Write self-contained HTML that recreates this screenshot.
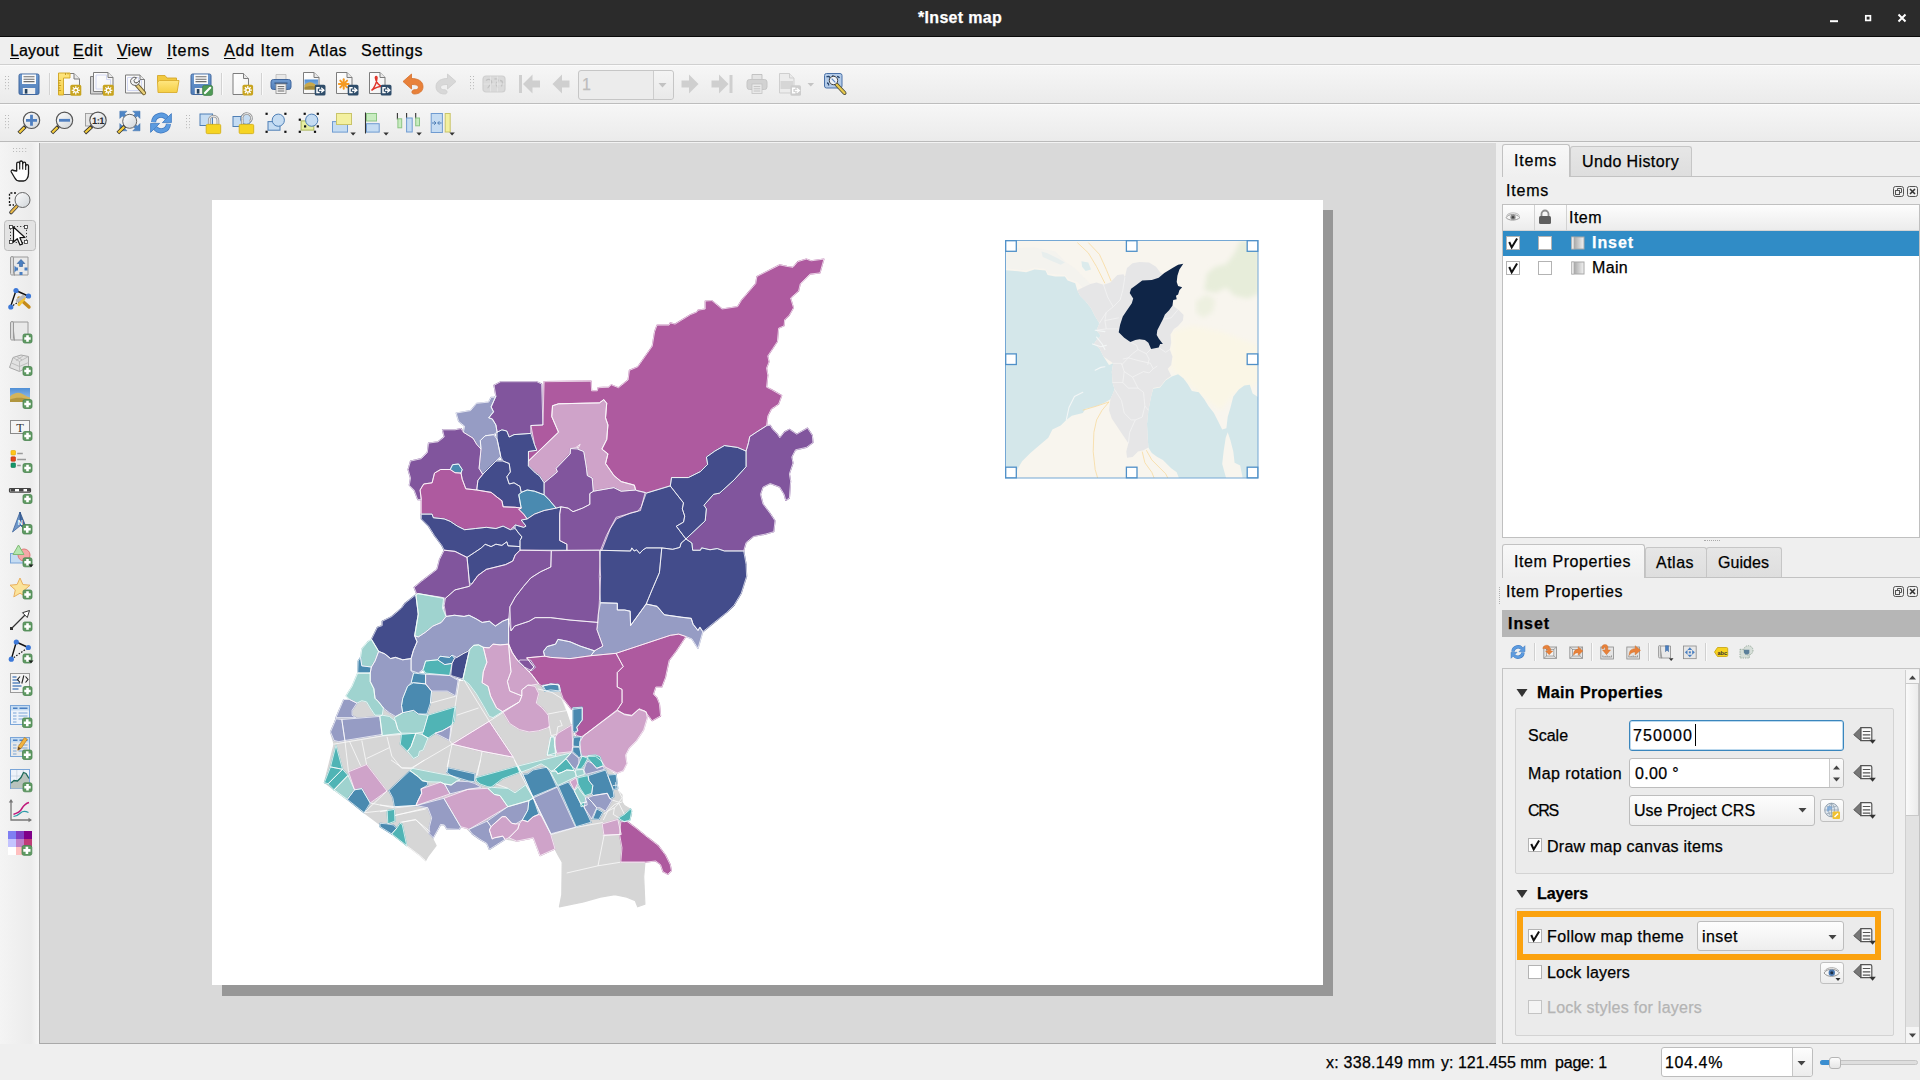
<!DOCTYPE html>
<html><head><meta charset="utf-8"><title>*Inset map</title>
<style>

html,body{margin:0;padding:0}
body{width:1920px;height:1080px;overflow:hidden;background:#efefef;font-family:"Liberation Sans",sans-serif;position:relative}
.t{position:absolute;white-space:nowrap;line-height:20px;font-family:"Liberation Sans",sans-serif;-webkit-text-stroke:0.25px currentColor}
.t u{text-decoration:underline;text-underline-offset:2px;text-decoration-thickness:1px}
.a{position:absolute;box-sizing:border-box}
.ic{position:absolute;overflow:visible}

</style></head>
<body>
<div class="a" style="left:0px;top:0px;width:1920px;height:36px;background:#2b2b2b"></div>
<div class="a" style="left:0px;top:36px;width:1920px;height:1px;background:#0a0a0a"></div>
<span class="t" style="left:918.0px;top:8.1px;font-size:16px;letter-spacing:0.31px;color:#fff;font-weight:700;">*Inset map</span>
<svg class="ic" style="left:1820px;top:8px" width="100" height="22" viewBox="0 0 100 22"><rect x="10" y="12.2" width="8" height="2" fill="#fff"/><rect x="45.8" y="7.8" width="4.6" height="4.6" fill="none" stroke="#fff" stroke-width="1.7"/><path d="M78.5 6.5l7 7M85.5 6.5l-7 7" stroke="#fff" stroke-width="2" fill="none"/></svg>
<div class="a" style="left:0px;top:37px;width:1920px;height:27px;background:#efefef"></div>
<div class="a" style="left:0px;top:64px;width:1920px;height:1px;background:#d0d0d0"></div>
<div class="a" style="left:0px;top:65px;width:1920px;height:1px;background:#fbfbfb"></div>
<span class="t" style="left:10.0px;top:40.8px;font-size:16px;letter-spacing:0.16px;color:#000;"><u>L</u>ayout</span>
<span class="t" style="left:73.0px;top:40.8px;font-size:16px;letter-spacing:0.61px;color:#000;"><u>E</u>dit</span>
<span class="t" style="left:117.0px;top:40.8px;font-size:16px;letter-spacing:0.15px;color:#000;"><u>V</u>iew</span>
<span class="t" style="left:167.0px;top:40.8px;font-size:16px;letter-spacing:0.78px;color:#000;"><u>I</u>tems</span>
<span class="t" style="left:224.0px;top:40.8px;font-size:16px;letter-spacing:0.87px;color:#000;"><u>A</u>dd Item</span>
<span class="t" style="left:309.0px;top:40.8px;font-size:16px;letter-spacing:0.49px;color:#000;">Atlas</span>
<span class="t" style="left:361.0px;top:40.8px;font-size:16px;letter-spacing:0.52px;color:#000;">Settings</span>
<div class="a" style="left:0px;top:66px;width:1920px;height:37px;background:linear-gradient(#f6f6f6,#ebebeb)"></div>
<div class="a" style="left:0px;top:103px;width:1920px;height:1px;background:#bdbdbd"></div>
<div class="a" style="left:0px;top:104px;width:1920px;height:1px;background:#fbfbfb"></div>
<div class="a" style="left:0px;top:105px;width:1920px;height:36px;background:linear-gradient(#f6f6f6,#ebebeb)"></div>
<div class="a" style="left:0px;top:141px;width:1920px;height:1px;background:#bababa"></div>
<div class="a" style="left:0px;top:142px;width:1920px;height:1px;background:#f3f3f3"></div>
<div class="a" style="left:578px;top:70px;width:96px;height:30px;background:#ececec;border:1px solid #c6c6c6;border-radius:3px"></div>
<div class="a" style="left:653px;top:71px;width:20px;height:28px;background:linear-gradient(#f4f4f4,#e9e9e9);border-left:1px solid #cdcdcd;border-radius:0 3px 3px 0"></div>
<svg class="ic" style="left:658px;top:82px" width="9" height="6" viewBox="0 0 9 6"><path d="M0.5 1h8L4.500 5.500z" fill="#c2c2c2"/></svg>
<span class="t" style="left:582.0px;top:75.3px;font-size:16px;letter-spacing:0.00px;color:#bdbdbd;">1</span>
<div class="a" style="left:0px;top:143px;width:39px;height:901px;background:linear-gradient(90deg,#f4f4f4,#ececec 80%,#f6f6f6)"></div>
<div class="a" style="left:39px;top:143px;width:1px;height:901px;background:#a8a8a8"></div>
<div class="a" style="left:40px;top:143px;width:1456px;height:901px;background:#d9d9d9;border-bottom:1px solid #a9a9a9"></div>
<div class="a" style="left:222px;top:210px;width:1111px;height:786px;background:#979797"></div>
<div class="a" style="left:212px;top:200px;width:1111px;height:785px;background:#fff"></div>
<svg class="ic" style="left:0;top:0" width="1920" height="1080" viewBox="0 0 1920 1080"><g stroke-width="1.2" stroke-linejoin="round">
<polygon fill="#d6d6d6" stroke="#d6d6d6" points="334.1,723.6 330.5,732.0 334.1,744.1 330.5,758.5 324.4,782.6 347.3,799.4 364.2,812.7 378.6,823.5 391.7,833.9 406.7,845.6 420.0,855.6 425.6,860.6 427.8,856.7 436.1,845.6 432.2,837.8 428.9,833.3 429.4,826.7 431.7,825.6 433.3,837.8 438.9,827.8 440.6,824.4 444.4,825.0 446.7,828.9 459.4,829.4 460.6,826.7 466.7,828.3 472.2,833.9 480.0,839.4 486.7,843.3 489.4,849.4 502.2,840.6 505.0,837.8 507.8,839.4 516.7,841.1 533.3,837.8 540.0,855.6 555.0,848.9 557.8,854.4 562.2,862.2 561.8,894.7 559.4,906.8 583.5,901.9 600.4,897.1 614.8,894.7 626.8,897.1 635.3,900.7 637.7,906.8 644.9,904.3 643.7,876.7 644.9,862.2 624.4,862.2 622.0,847.8 619.6,834.5 620.8,821.8 629.3,820.1 631.7,814.1 630.5,809.3 624.4,805.6 622.0,802.0 622.0,794.8 617.2,790.0 616.0,775.6 605.2,767.1 581.1,756.3 559.4,691.3 528.1,672.0 502.6,681.5 454.4,681.5 411.1,691.1 370.2,698.3 348.5,698.8 338.9,710.4"/>
<polygon fill="#ae5a9f" stroke="#ae5a9f" points="823.9,259.1 820.0,272.9 809.9,274.1 800.3,283.7 798.6,290.9 790.6,298.1 793.5,307.8 789.4,315.0 784.6,319.8 784.1,325.8 778.6,328.2 777.4,341.5 772.6,348.7 767.8,355.9 769.0,361.9 766.6,368.0 767.8,375.2 766.6,387.2 771.4,389.6 781.7,395.6 778.6,404.1 771.4,408.9 767.8,416.1 766.6,425.7 756.9,431.8 749.7,436.6 748.5,442.6 746.1,451.0 737.7,447.4 724.4,445.5 714.8,451.0 706.4,457.0 707.6,464.3 700.4,471.5 688.3,477.5 671.5,477.5 670.3,485.7 646.7,492.9 637.8,491.0 635.6,490.0 634.4,485.2 621.2,481.6 613.9,475.6 605.5,463.5 607.9,453.9 601.9,449.1 606.7,439.5 607.9,425.0 605.5,417.8 606.7,403.3 603.8,399.7 599.5,402.9 558.6,403.8 552.6,405.8 551.8,416.6 558.6,432.2 528.5,461.1 528.5,451.5 536.9,450.3 534.5,444.3 530.9,425.5 542.9,425.0 544.1,381.7 591.1,381.2 591.6,390.8 597.3,390.8 598.1,387.7 608.9,387.2 611.3,384.8 618.5,387.7 628.1,380.0 629.4,370.4 637.8,366.8 652.2,346.3 654.6,331.8 657.0,325.1 669.1,325.1 670.3,322.9 675.1,324.1 690.7,314.5 696.8,312.1 698.0,310.2 705.2,309.0 705.2,301.0 711.9,300.6 722.0,309.0 737.7,306.6 741.3,300.6 755.7,283.7 756.9,276.5 779.8,264.9 787.0,266.4 793.0,267.3 797.9,261.6 806.3,259.1 811.1,260.8"/>
<polygon fill="#81559d" stroke="#81559d" points="746.1,451.0 748.5,442.6 749.7,436.6 756.9,431.8 766.6,425.7 770.2,425.3 772.6,429.3 777.4,434.2 779.8,437.8 784.6,431.8 789.4,429.3 796.7,434.2 807.5,428.1 812.3,435.4 813.0,442.6 806.3,447.4 795.5,449.8 791.8,457.0 793.0,463.0 789.4,473.9 790.6,481.1 789.4,498.0 785.8,500.4 784.1,494.3 779.8,487.1 770.2,483.5 763.0,487.1 760.5,494.3 763.0,504.0 770.2,513.6 775.0,520.8 773.8,531.7 765.4,534.1 753.3,536.5 746.1,542.5 743.7,550.9 724.4,550.9 717.2,548.5 710.0,549.7 701.6,547.8 700.4,550.2 692.7,550.2 691.9,543.0 685.9,538.9 705.2,520.8 706.4,508.8 704.0,505.2 713.6,494.3 719.6,493.1 734.1,479.9 746.1,466.7"/>
<polygon fill="#434c8b" stroke="#434c8b" points="685.9,539.0 691.9,543.1 692.7,550.3 700.4,550.3 701.6,547.9 710.0,549.8 717.2,548.6 724.4,551.0 743.7,551.0 746.1,564.3 746.6,576.3 741.3,593.1 734.1,605.2 726.8,612.4 714.8,622.0 702.8,631.7 699.9,627.3 698.0,630.5 693.1,624.4 691.2,618.4 681.1,617.2 664.3,614.8 657.0,606.4 646.2,604.0 652.2,589.5 659.4,572.7 661.8,547.9 672.7,549.3 679.9,547.4 681.1,543.1"/>
<polygon fill="#434c8b" stroke="#434c8b" points="600.5,550.3 630.6,551.0 631.8,547.9 634.2,551.0 636.6,549.8 639.7,553.4 643.1,549.8 646.2,547.9 661.8,547.9 659.4,572.7 652.2,589.5 646.2,604.0 630.6,625.6 630.1,611.2 624.5,610.0 617.3,610.0 617.3,603.3 600.5,602.8 599.3,576.3"/>
<polygon fill="#434c8b" stroke="#434c8b" points="646.2,493.2 670.3,486.0 683.5,502.9 682.3,508.9 684.7,516.1 683.5,522.1 676.3,526.2 685.9,539.0 681.1,543.1 679.9,547.4 672.7,549.3 661.8,547.9 646.2,547.9 643.1,549.8 639.7,553.4 636.6,549.8 634.2,551.0 631.8,547.9 630.6,551.0 600.5,550.3 606.5,535.4 616.1,517.3 637.8,511.3 641.4,506.5"/>
<polygon fill="#434c8b" stroke="#434c8b" points="670.3,486.0 671.5,477.6 688.3,477.6 700.4,471.6 707.6,464.4 706.4,457.1 714.8,451.1 724.4,445.6 737.7,447.5 746.1,451.1 746.1,466.8 734.1,480.0 719.6,493.2 713.6,494.4 704.0,505.3 706.4,508.9 705.2,520.9 685.9,539.0 676.3,526.2 683.5,522.1 684.7,516.1 682.3,508.9 683.5,502.9"/>
<polygon fill="#969cc4" stroke="#969cc4" points="600.5,602.8 617.3,603.3 617.3,610.0 624.5,610.0 630.1,611.2 630.6,625.6 646.2,604.0 657.0,606.4 664.3,614.8 681.1,617.2 691.2,618.4 693.1,624.4 698.0,630.5 699.9,627.3 702.8,631.7 700.4,640.1 698.0,648.5 691.9,638.9 685.9,636.5 678.7,634.1 670.3,635.3 616.1,653.3 590.8,655.7 594.4,650.9 602.9,646.1 596.9,629.3 598.1,614.8"/>
<polygon fill="#ae5a9f" stroke="#ae5a9f" points="616.1,653.3 670.3,635.3 678.7,634.1 685.9,636.5 676.3,650.9 669.1,660.5 665.5,677.4 661.8,687.0 655.8,687.0 653.4,694.3 657.0,697.9 659.4,703.9 660.6,715.9 652.2,720.7 645.0,711.1 639.0,708.7 631.8,715.9 624.5,714.7 617.3,709.9 622.1,702.7 622.1,689.4 617.3,687.0 617.3,672.6 623.3,666.6"/>
<polygon fill="#81559d" stroke="#81559d" points="494.0,385.3 500.7,381.7 536.8,381.7 541.7,384.1 542.9,425.0 530.8,425.5 530.8,433.4 514.0,434.6 509.2,437.0 506.8,431.0 501.9,429.8 497.1,432.2 495.9,425.0 492.3,419.0 488.7,417.8 493.5,411.8 491.1,406.9 495.9,396.1"/>
<polygon fill="#cfa3c9" stroke="#cfa3c9" points="528.4,461.1 558.5,432.2 551.8,416.6 552.5,405.7 558.5,403.8 599.4,402.9 603.8,399.7 606.7,403.3 605.5,417.8 607.9,425.0 606.7,439.4 601.8,449.1 607.9,453.9 605.5,463.5 613.9,475.6 621.1,481.6 634.3,485.2 635.5,490.0 621.1,491.2 613.9,487.6 593.4,491.2 592.2,478.0 587.4,475.6 586.2,465.9 583.8,451.5 577.8,449.1 580.2,444.3 575.4,447.9 570.5,448.6 570.1,453.9 556.1,468.3 557.3,471.9 544.1,482.8 539.3,475.6 535.6,473.1 528.4,465.9"/>
<polygon fill="#81559d" stroke="#81559d" points="544.1,482.8 557.3,471.9 556.1,468.3 570.1,453.9 570.5,448.6 577.8,449.1 583.8,451.5 586.2,465.9 587.4,475.6 592.2,478.0 593.4,491.2 589.8,493.6 589.8,504.4 582.6,508.1 573.0,511.7 568.1,508.1 560.9,506.8 556.1,508.1 548.9,499.6 544.1,494.8"/>
<polygon fill="#434c8b" stroke="#434c8b" points="497.1,432.2 501.9,429.8 506.8,431.0 509.2,437.0 514.0,434.6 530.8,433.4 534.4,444.3 536.8,450.3 528.4,451.5 528.4,465.9 535.6,473.1 539.3,475.6 544.1,482.8 544.1,494.8 534.4,491.2 527.2,490.0 521.2,492.4 520.0,486.4 514.0,482.8 509.2,484.0 506.8,476.8 510.4,471.9 509.2,463.5 503.1,461.1 500.7,456.3 497.1,439.4"/>
<polygon fill="#969cc4" stroke="#969cc4" points="456.2,413.0 470.6,410.6 476.7,403.3 488.7,402.1 491.1,397.3 494.0,397.3 495.9,396.1 491.1,406.9 493.5,411.8 488.7,417.8 492.3,419.0 495.9,425.0 497.1,432.2 493.5,434.6 485.1,435.8 480.3,440.6 481.0,449.1 476.7,444.3 473.1,438.2 463.4,432.2 464.6,426.2 458.6,421.4"/>
<polygon fill="#969cc4" stroke="#969cc4" points="480.3,440.6 485.1,435.8 493.5,434.6 497.1,439.4 500.7,456.3 495.9,461.1 487.5,469.5 482.7,474.3 479.1,468.3 481.0,449.1"/>
<polygon fill="#434c8b" stroke="#434c8b" points="482.7,474.3 487.5,469.5 495.9,461.1 503.1,461.1 509.2,463.5 510.4,471.9 506.8,476.8 509.2,484.0 514.0,482.8 520.0,486.4 521.2,492.4 518.8,494.8 521.2,508.1 515.2,507.3 503.1,506.8 501.9,500.8 497.1,497.2 491.1,492.4 476.7,490.0 477.9,480.4"/>
<polygon fill="#4a8ab0" stroke="#4a8ab0" points="521.2,492.4 527.2,490.0 534.4,491.2 544.1,494.8 548.9,499.6 556.1,508.1 544.1,510.5 534.4,514.1 527.2,518.9 523.6,514.1 518.8,509.3 521.2,508.1 518.8,494.8"/>
<polygon fill="#81559d" stroke="#81559d" points="408.1,469.5 410.5,461.1 421.3,458.7 427.3,452.7 428.5,443.1 438.1,441.8 444.2,437.0 442.5,429.8 455.0,429.8 461.0,428.6 463.4,432.2 473.1,438.2 476.7,444.3 481.0,449.1 479.1,468.3 482.7,474.3 477.9,480.4 476.7,490.0 465.8,488.8 462.2,479.2 461.0,473.1 462.2,469.5 458.6,464.0 452.6,464.7 450.2,469.5 440.6,469.5 434.5,473.1 432.1,482.8 423.7,484.0 420.1,490.0 421.3,499.6 417.7,499.6 414.1,490.0 409.3,485.2 410.5,478.0"/>
<polygon fill="#4a8ab0" stroke="#4a8ab0" points="450.2,469.5 452.6,464.7 458.6,464.0 462.2,469.5 461.0,473.1 455.0,472.7"/>
<polygon fill="#ae5a9f" stroke="#ae5a9f" points="421.3,499.6 420.1,490.0 423.7,484.0 432.1,482.8 434.5,473.1 440.6,469.5 450.2,469.5 455.0,472.7 461.0,473.1 462.2,479.2 465.8,488.8 476.7,490.0 491.1,492.4 497.1,497.2 501.9,500.8 503.1,506.8 515.2,507.3 521.2,508.1 518.8,509.3 523.6,514.1 527.2,518.9 521.2,520.1 526.0,526.1 523.6,527.3 515.2,524.9 510.4,529.7 503.1,526.1 495.9,528.5 486.3,527.3 475.5,528.5 464.6,529.7 457.4,526.1 450.2,521.3 444.2,518.9 433.3,517.7 432.1,514.1 421.3,514.1"/>
<polygon fill="#434c8b" stroke="#434c8b" points="421.3,514.1 432.1,514.1 433.3,517.7 444.2,518.9 450.2,521.3 457.4,526.1 464.6,529.7 475.5,528.5 486.3,527.3 495.9,528.5 503.1,526.1 510.4,529.7 515.2,528.5 518.8,533.3 521.9,536.9 520.0,540.5 520.0,546.6 508.0,545.8 506.8,541.8 501.9,545.4 495.9,544.2 491.1,546.6 485.1,544.2 481.5,547.8 474.3,552.6 467.0,557.4 462.2,555.0 455.0,551.4 444.2,550.2 441.8,545.4 434.5,535.7 428.5,526.1 421.3,518.9"/>
<polygon fill="#434c8b" stroke="#434c8b" points="527.2,518.9 534.4,514.1 544.1,510.5 556.1,508.1 560.9,506.8 559.7,514.1 559.7,540.5 566.9,544.2 566.9,550.2 520.0,550.2 520.0,546.6 520.0,540.5 521.9,536.9 518.8,533.3 515.2,528.5 515.2,524.9 523.6,527.3 526.0,526.1 521.2,520.1"/>
<polygon fill="#81559d" stroke="#81559d" points="560.9,506.8 568.1,508.1 573.0,511.7 582.6,508.1 589.8,504.4 589.8,493.6 593.4,491.2 613.9,487.6 621.1,491.2 635.5,490.0 645.2,492.4 640.4,510.5 630.7,512.9 616.3,518.9 610.3,528.5 601.8,550.2 566.9,550.2 566.9,544.2 559.7,540.5 559.7,514.1"/>
<polygon fill="#434c8b" stroke="#434c8b" points="467.0,557.4 474.3,552.6 481.5,547.8 485.1,544.2 491.1,546.6 495.9,544.2 501.9,545.4 506.8,541.8 508.0,545.8 520.0,546.6 520.0,550.2 515.2,555.0 512.8,561.0 505.6,564.6 495.9,567.0 486.3,569.4 477.9,575.5 471.8,583.9 469.4,582.7 468.2,569.4"/>
<polygon fill="#81559d" stroke="#81559d" points="444.2,550.2 455.0,551.4 462.2,555.0 467.0,557.4 468.2,569.4 469.4,582.7 469.4,586.3 455.0,589.9 445.4,598.3 440.6,597.1 416.5,593.5 414.1,587.5 421.3,581.5 436.9,569.4 439.4,559.8"/>
<polygon fill="#81559d" stroke="#81559d" points="520.0,550.2 551.3,550.7 550.8,567.0 540.5,571.8 530.8,577.9 523.6,586.3 515.2,597.1 509.9,606.8 508.7,618.8 502.7,621.2 495.4,626.0 489.4,621.2 482.2,622.4 476.2,618.8 469.0,615.2 464.1,616.4 454.5,615.2 446.1,616.4 444.2,605.5 445.4,598.3 455.0,589.9 469.4,586.3 471.8,583.9 477.9,575.5 486.3,569.4 495.9,567.0 505.6,564.6 512.8,561.0 515.2,555.0"/>
<polygon fill="#81559d" stroke="#81559d" points="551.3,550.7 599.4,550.2 600.6,576.7 599.4,600.7 598.2,622.4 570.1,620.0 550.8,617.6 535.2,617.6 529.1,621.2 514.7,626.0 511.1,630.8 509.9,606.8 515.2,597.1 523.6,586.3 530.8,577.9 540.5,571.8 550.8,567.0"/>
<polygon fill="#81559d" stroke="#81559d" points="511.0,630.9 514.6,626.1 529.1,621.3 535.1,617.7 550.7,617.7 570.0,620.1 598.2,622.5 597.0,629.7 603.0,646.1 594.5,650.9 580.1,646.1 570.0,641.8 558.0,639.4 555.5,644.2 547.1,646.6 543.5,651.4 544.7,656.2 526.7,657.9 533.9,667.0 529.1,671.8 524.3,667.0 517.0,659.8 512.2,652.6 508.6,644.2 508.6,618.9"/>
<polygon fill="#969cc4" stroke="#969cc4" points="558.0,639.4 570.0,641.8 580.1,646.1 594.5,650.9 590.9,655.7 570.0,658.6 550.7,657.4 544.7,656.2 543.5,651.4 547.1,646.6 555.5,644.2"/>
<polygon fill="#ae5a9f" stroke="#ae5a9f" points="526.7,657.8 544.8,656.1 550.8,657.4 570.0,658.6 590.7,655.7 616.0,653.3 623.2,666.5 617.2,672.5 617.2,687.0 622.0,689.4 622.0,702.6 617.2,709.8 583.5,735.8 581.1,736.6 576.8,735.6 575.6,733.4 577.7,730.5 576.8,727.2 578.9,724.5 582.3,719.9 582.3,708.1 571.5,709.4 563.1,698.5 560.4,691.1 559.2,685.0 550.8,683.8 542.3,686.2 538.7,683.8 531.5,674.2 529.1,671.8 533.9,667.0"/>
<polygon fill="#434c8b" stroke="#434c8b" points="415.9,594.8 418.3,614.1 415.9,628.5 414.7,635.7 417.1,641.8 413.5,650.2 411.1,658.6 402.7,659.8 395.5,657.4 390.6,658.6 384.6,653.8 378.6,651.4 371.4,639.4 377.4,627.3 382.2,625.6 382.2,621.3 391.8,616.5 401.5,608.1 405.1,603.2"/>
<polygon fill="#9fd3cf" stroke="#9fd3cf" points="415.9,594.8 418.3,593.6 443.6,598.4 442.4,608.1 446.0,616.5 441.2,622.5 432.8,626.1 425.6,632.1 418.3,636.9 414.7,635.7 415.9,628.5 418.3,614.1"/>
<polygon fill="#969cc4" stroke="#969cc4" points="418.3,636.9 425.6,632.1 432.8,626.1 441.2,622.5 446.0,616.5 454.4,615.3 464.1,616.5 468.9,615.3 476.1,618.9 482.1,622.5 489.3,621.3 495.4,626.1 502.6,621.3 508.6,618.9 508.6,644.2 500.2,644.9 493.0,644.2 489.3,647.8 483.3,647.3 478.5,644.9 473.7,645.4 470.1,649.0 467.7,651.4 464.1,653.1 456.8,657.4 452.0,655.0 449.6,657.4 440.0,656.2 437.6,659.8 425.6,661.0 423.1,669.4 418.3,673.1 411.1,670.6 411.1,658.6 413.5,650.2 417.1,641.8 414.7,635.7"/>
<polygon fill="#9fd3cf" stroke="#9fd3cf" points="371.4,639.4 378.6,651.4 375.0,661.0 371.4,667.0 361.8,665.8 360.6,657.4 361.8,649.0 367.8,641.8"/>
<polygon fill="#4a8ab0" stroke="#4a8ab0" points="360.6,657.4 361.8,665.8 371.4,667.0 370.2,673.1 357.7,673.1 358.1,661.0"/>
<polygon fill="#969cc4" stroke="#969cc4" points="378.6,651.4 384.6,653.8 390.6,658.6 395.5,657.4 402.7,659.8 411.1,658.6 411.1,670.6 413.5,673.1 411.1,682.7 407.5,686.3 402.7,698.3 401.5,705.6 402.7,712.8 395.5,716.4 389.4,712.8 383.4,708.0 378.6,701.9 375.0,698.3 373.8,688.7 370.2,681.5 370.2,673.1 371.4,667.0 375.0,661.0"/>
<polygon fill="#9fd3cf" stroke="#9fd3cf" points="357.7,673.1 370.2,673.1 370.2,681.5 373.8,688.7 375.0,698.3 378.6,701.9 383.4,708.0 382.2,715.2 375.0,715.2 370.2,708.0 366.6,701.9 361.8,700.7 356.9,703.1 349.7,699.5 346.1,695.9 352.1,686.3"/>
<polygon fill="#969cc4" stroke="#969cc4" points="343.7,699.5 349.7,699.5 356.9,703.1 352.1,710.4 352.1,715.2 355.7,717.6 336.0,717.6 340.1,708.0"/>
<polygon fill="#969cc4" stroke="#969cc4" points="336.0,718.8 341.8,719.5 344.9,740.5 338.9,741.7 334.1,740.5 330.5,732.0 334.1,723.6"/>
<polygon fill="#969cc4" stroke="#969cc4" points="341.8,719.5 379.8,716.4 382.2,734.4 344.9,740.5"/>
<polygon fill="#9fd3cf" stroke="#9fd3cf" points="379.8,716.4 382.2,715.2 389.4,716.4 395.5,721.2 397.9,729.6 401.5,733.2 382.2,735.6"/>
<polygon fill="#9fd3cf" stroke="#9fd3cf" points="395.5,721.2 394.3,717.6 402.7,712.8 413.5,710.4 418.3,714.0 428.0,715.2 423.1,732.0 415.9,733.2 401.5,733.2 397.9,729.6"/>
<polygon fill="#50b4b5" stroke="#50b4b5" points="428.0,715.2 455.6,706.8 454.4,721.2 450.8,726.0 442.4,730.8 435.2,733.2 428.0,738.1 421.9,734.4 423.1,732.0"/>
<polygon fill="#4a8ab0" stroke="#4a8ab0" points="407.5,686.3 413.5,682.7 425.6,683.9 431.6,691.1 430.4,703.1 426.8,714.0 418.3,714.0 413.5,710.4 402.7,712.8 401.5,705.6 402.7,698.3"/>
<polygon fill="#4a8ab0" stroke="#4a8ab0" points="413.5,673.1 425.6,674.3 425.6,683.9 413.5,682.7 411.1,682.7"/>
<polygon fill="#50b4b5" stroke="#50b4b5" points="425.6,661.0 437.6,659.8 444.8,664.6 452.0,663.4 449.6,675.5 425.6,673.1 423.1,669.4"/>
<polygon fill="#4a8ab0" stroke="#4a8ab0" points="440.0,656.2 449.6,657.4 452.0,655.0 454.4,658.6 452.0,663.4 444.8,664.6 437.6,659.8"/>
<polygon fill="#434c8b" stroke="#434c8b" points="456.8,657.4 464.1,653.1 467.7,651.4 468.9,652.6 462.9,679.1 450.8,675.5 452.0,663.4 454.4,658.6"/>
<polygon fill="#969cc4" stroke="#969cc4" points="425.6,674.3 449.6,675.5 458.1,680.3 455.6,695.9 447.2,691.1 431.6,691.1 425.6,683.9"/>
<polygon fill="#9fd3cf" stroke="#9fd3cf" points="470.1,649.0 473.7,645.4 478.5,644.9 483.3,647.3 486.9,662.2 483.3,671.8 482.1,682.7 488.1,686.3 490.5,695.9 496.6,708.0 502.6,711.6 493.0,717.6 489.3,716.4 483.3,705.6 476.1,693.5 468.9,683.9 464.1,680.3 462.9,679.1 468.9,652.6"/>
<polygon fill="#cfa3c9" stroke="#cfa3c9" points="486.9,647.8 489.3,647.8 493.0,644.2 500.2,644.9 508.6,644.2 509.8,659.8 511.0,671.8 507.4,681.5 509.8,691.1 521.8,695.9 519.4,701.9 502.6,711.6 496.6,708.0 490.5,695.9 488.1,686.3 482.1,682.7 483.3,671.8 486.9,662.2 483.3,647.3"/>
<polygon fill="#cfa3c9" stroke="#cfa3c9" points="508.6,644.2 512.2,652.6 517.0,659.8 524.3,667.0 531.5,674.3 538.7,683.9 531.5,685.1 527.9,685.1 521.8,689.9 521.8,695.9 509.8,691.1 507.4,681.5 511.0,671.8 509.8,659.8"/>
<polygon fill="#cfa3c9" stroke="#cfa3c9" points="502.6,711.6 519.4,701.9 521.8,695.9 521.8,689.9 527.9,685.1 535.1,686.3 538.7,693.5 536.3,703.1 542.3,708.0 548.3,715.2 549.5,727.2 538.7,730.8 529.1,732.0 519.4,729.6 509.8,723.6"/>
<polygon fill="#cfa3c9" stroke="#cfa3c9" points="489.3,721.2 513.4,757.3 482.1,751.3 452.0,744.1"/>
<polygon fill="#4a8ab0" stroke="#4a8ab0" points="542.3,686.3 550.7,683.9 559.2,685.1 560.4,691.1 550.7,689.9 544.7,691.1"/>
<polygon fill="#50b4b5" stroke="#50b4b5" points="336.0,745.3 342.5,769.3 330.5,766.9"/>
<polygon fill="#50b4b5" stroke="#50b4b5" points="330.5,766.9 342.5,769.3 328.1,783.8 324.4,782.6"/>
<polygon fill="#50b4b5" stroke="#50b4b5" points="342.5,769.3 348.0,775.4 334.1,789.8 328.1,783.8"/>
<polygon fill="#9fd3cf" stroke="#9fd3cf" points="348.0,775.4 354.5,789.8 347.3,799.4 334.1,789.8"/>
<polygon fill="#cfa3c9" stroke="#cfa3c9" points="348.5,771.8 366.6,764.5 387.0,791.0 370.2,803.0 361.8,788.6 354.5,789.8"/>
<polygon fill="#4a8ab0" stroke="#4a8ab0" points="354.5,789.8 361.8,788.6 370.2,803.0 364.2,812.7 347.3,799.4"/>
<polygon fill="#50b4b5" stroke="#50b4b5" points="401.5,734.4 415.9,733.2 411.1,746.5 407.5,751.3 400.3,744.1"/>
<polygon fill="#9fd3cf" stroke="#9fd3cf" points="415.9,733.2 421.9,734.4 428.0,738.1 423.1,750.1 419.5,751.3 418.3,756.1 413.5,758.5 407.5,751.3 411.1,746.5"/>
<polygon fill="#969cc4" stroke="#969cc4" points="442.4,730.8 450.8,726.0 449.6,740.5 435.2,733.2"/>
<polygon fill="#9fd3cf" stroke="#9fd3cf" points="550.7,736.8 554.3,736.8 555.5,756.1 547.1,754.9"/>
<polygon fill="#81559d" stroke="#81559d" points="519.7,660.0 530.6,660.0 535.4,667.2 531.8,670.8 524.5,667.2 518.5,662.4"/>
<polygon fill="#4a8ab0" stroke="#4a8ab0" points="542.6,685.3 558.2,684.1 559.4,691.3 546.2,691.3"/>
<polygon fill="#cfa3c9" stroke="#cfa3c9" points="617.2,710.6 624.4,714.2 631.7,715.4 638.9,709.4 646.1,711.8 647.3,717.8 643.7,729.8 636.5,740.6 629.3,747.9 625.6,755.1 626.8,763.5 623.2,770.7 617.2,773.1 605.2,767.1 601.6,761.1 595.6,756.3 581.1,756.3 579.9,741.8 583.5,735.8"/>
<polygon fill="#ae5a9f" stroke="#ae5a9f" points="620.8,821.8 626.8,821.3 636.5,828.5 648.5,838.1 658.1,845.4 665.4,855.0 670.2,864.6 671.4,870.6 667.8,874.3 663.0,871.8 660.5,864.6 655.7,861.0 644.9,862.2 620.8,862.2 622.0,847.8 619.6,834.5"/>
<polygon fill="#4a8ab0" stroke="#4a8ab0" points="410.0,770.6 418.3,776.7 422.2,780.6 427.2,781.7 427.8,785.0 421.1,788.9 421.7,793.3 417.8,801.1 415.6,805.6 394.4,806.7 392.8,797.8 388.9,790.6"/>
<polygon fill="#cfa3c9" stroke="#cfa3c9" points="421.1,788.9 440.6,782.2 444.4,783.9 450.0,793.9 416.1,805.6 417.8,801.1 421.7,793.3"/>
<polygon fill="#969cc4" stroke="#969cc4" points="444.4,783.9 451.1,785.0 456.7,781.1 468.9,781.7 474.4,783.3 481.1,787.2 467.8,789.4 450.0,793.9"/>
<polygon fill="#cfa3c9" stroke="#cfa3c9" points="443.9,798.3 467.8,789.4 487.8,788.3 494.4,794.4 500.0,795.6 507.8,806.7 468.9,829.4 466.7,828.3 460.6,826.7"/>
<polygon fill="#969cc4" stroke="#969cc4" points="416.1,805.6 443.9,798.3 460.6,826.7 459.4,829.4 446.7,828.9 444.4,825.0 440.6,824.4 438.9,827.8 433.3,837.8 428.9,833.3 429.4,826.7 431.7,817.8 427.8,807.8"/>
<polygon fill="#969cc4" stroke="#969cc4" points="468.9,829.4 487.2,821.1 491.1,826.7 489.4,830.0 492.2,838.9 494.4,837.8 502.8,836.1 505.0,839.4 489.4,849.4 486.7,843.3 480.0,839.4 472.2,833.9"/>
<polygon fill="#969cc4" stroke="#969cc4" points="487.2,821.1 507.8,806.7 528.9,800.6 527.8,810.0 522.2,820.0 515.6,823.9 511.7,823.3 505.6,816.7 502.2,816.7 492.2,825.6 491.1,826.7"/>
<polygon fill="#cfa3c9" stroke="#cfa3c9" points="491.1,826.7 492.2,825.6 502.2,816.7 505.6,816.7 511.7,823.3 515.6,823.9 519.4,823.9 517.8,828.9 508.9,837.8 505.0,839.4 502.8,836.1 494.4,837.8 492.2,838.9 489.4,830.0"/>
<polygon fill="#4a8ab0" stroke="#4a8ab0" points="528.9,800.6 533.3,798.3 538.9,814.4 533.3,816.7 527.8,821.7 522.2,820.0 527.8,810.0"/>
<polygon fill="#cfa3c9" stroke="#cfa3c9" points="519.4,823.9 522.2,820.0 527.8,821.7 533.3,816.7 538.9,814.4 541.1,815.6 550.6,833.9 555.0,848.9 540.0,855.6 533.3,837.8 516.7,841.1 508.9,837.8 517.8,828.9"/>
<polygon fill="#9fd3cf" stroke="#9fd3cf" points="487.8,788.3 491.1,787.2 497.8,787.8 507.8,788.3 515.0,792.8 525.6,785.0 533.3,797.8 528.9,800.6 507.8,806.7 500.0,795.6 494.4,794.4"/>
<polygon fill="#50b4b5" stroke="#50b4b5" points="475.6,777.8 517.8,766.1 520.0,772.2 502.2,778.9 495.6,783.9 491.1,787.2 487.8,786.7 480.0,783.9 476.7,781.1"/>
<polygon fill="#4a8ab0" stroke="#4a8ab0" points="447.8,767.8 475.0,773.9 474.4,781.7 468.9,781.1 451.1,775.6 446.7,772.2"/>
<polygon fill="#9fd3cf" stroke="#9fd3cf" points="410.0,770.6 412.2,768.3 446.7,775.0 451.1,775.6 460.0,780.0 456.7,781.1 451.1,785.0 444.4,783.9 440.6,782.2 427.2,781.7 422.2,780.6 418.3,776.7"/>
<polygon fill="#4a8ab0" stroke="#4a8ab0" points="522.8,774.4 527.8,773.9 533.3,770.0 546.7,767.2 550.0,772.2 556.7,786.7 532.8,796.7"/>
<polygon fill="#50b4b5" stroke="#50b4b5" points="387.2,810.6 394.4,809.4 395.0,821.1 387.8,823.9"/>
<polygon fill="#4a8ab0" stroke="#4a8ab0" points="380.0,823.3 387.8,823.9 393.3,825.0 396.7,828.3 391.7,833.9 380.0,826.7"/>
<polygon fill="#50b4b5" stroke="#50b4b5" points="396.7,828.3 400.0,823.3 402.2,824.4 406.7,845.6 391.7,833.9"/>
<polygon fill="#4a8ab0" stroke="#4a8ab0" points="572.8,707.8 582.2,707.2 582.2,720.0 578.9,724.4 576.7,727.2 577.8,730.6 574.4,732.2 572.8,731.1"/>
<polygon fill="#4a8ab0" stroke="#4a8ab0" points="573.9,737.2 581.1,736.7 580.0,742.2 579.4,746.7 572.8,746.1 573.3,740.0"/>
<polygon fill="#4a8ab0" stroke="#4a8ab0" points="572.8,747.2 579.4,747.2 580.6,752.2 581.7,755.6 578.9,757.8 576.7,755.0 572.8,751.7"/>
<polygon fill="#50b4b5" stroke="#50b4b5" points="587.8,755.6 595.6,755.0 600.0,756.7 603.3,765.6 596.7,768.3 592.2,763.3 587.8,758.3"/>
<polygon fill="#50b4b5" stroke="#50b4b5" points="582.2,756.1 587.8,758.3 584.4,764.4 581.1,768.9 576.7,768.9 578.9,763.3"/>
<polygon fill="#969cc4" stroke="#969cc4" points="587.8,761.1 592.2,763.3 596.7,768.3 603.3,766.1 604.4,769.4 585.6,774.4 583.9,770.0 585.6,764.4"/>
<polygon fill="#969cc4" stroke="#969cc4" points="571.7,752.2 578.9,758.3 578.9,763.3 575.6,769.4 572.2,766.7 566.1,758.3"/>
<polygon fill="#50b4b5" stroke="#50b4b5" points="566.1,758.9 572.2,766.7 573.9,770.6 566.7,770.0 562.2,772.2 557.8,773.9 556.1,771.1 553.9,770.0"/>
<polygon fill="#9fd3cf" stroke="#9fd3cf" points="517.8,766.1 540.0,760.6 571.1,752.8 566.1,758.3 553.9,770.0 551.1,771.1 546.7,767.2 541.1,763.9 530.0,768.9 521.1,772.2"/>
<polygon fill="#9fd3cf" stroke="#9fd3cf" points="551.1,771.7 556.1,771.1 557.8,773.9 562.2,772.2 566.7,770.0 573.9,770.6 575.6,773.3 576.1,776.7 557.8,785.6 550.6,772.2"/>
<polygon fill="#9fd3cf" stroke="#9fd3cf" points="575.6,770.0 583.3,769.4 584.4,774.4 576.7,776.7 575.6,773.3"/>
<polygon fill="#969cc4" stroke="#969cc4" points="533.3,797.8 557.2,787.2 575.6,827.2 550.6,833.9"/>
<polygon fill="#4a8ab0" stroke="#4a8ab0" points="558.3,786.1 568.3,782.2 574.4,791.1 580.6,803.3 584.4,807.8 591.1,822.2 576.1,826.7"/>
<polygon fill="#cfa3c9" stroke="#cfa3c9" points="570.0,781.7 576.1,777.8 577.8,783.3 574.4,790.0"/>
<polygon fill="#50b4b5" stroke="#50b4b5" points="577.8,777.8 587.8,775.6 588.9,780.6 592.8,785.6 591.7,793.3 585.0,795.6 580.6,788.9 577.8,783.3"/>
<polygon fill="#4a8ab0" stroke="#4a8ab0" points="588.3,775.6 605.6,770.0 607.8,775.6 613.3,791.1 613.9,796.7 610.0,798.9 607.2,793.3 593.3,795.6 591.7,793.3 592.8,785.6 588.9,780.6"/>
<polygon fill="#4a8ab0" stroke="#4a8ab0" points="608.3,775.0 616.1,774.4 617.8,788.9 613.3,789.4 607.8,775.6"/>
<polygon fill="#9fd3cf" stroke="#9fd3cf" points="574.4,791.1 577.8,786.7 580.6,791.1 585.0,796.7 586.7,802.2 580.6,803.3"/>
<polygon fill="#50b4b5" stroke="#50b4b5" points="580.6,803.3 586.7,801.7 587.2,805.0 581.1,806.7"/>
<polygon fill="#969cc4" stroke="#969cc4" points="587.8,797.8 593.3,795.6 607.2,793.3 610.0,798.9 612.2,800.0 605.6,811.1 600.0,807.8 596.7,807.8 592.2,802.2"/>
<polygon fill="#969cc4" stroke="#969cc4" points="585.6,797.8 587.8,797.8 592.2,802.2 596.7,807.8 591.7,818.9 584.4,807.8"/>
<polygon fill="#4a8ab0" stroke="#4a8ab0" points="596.7,808.9 602.8,812.2 598.9,819.4 592.8,818.9"/>
<polygon fill="#50b4b5" stroke="#50b4b5" points="618.9,817.8 624.4,814.4 630.6,808.9 631.7,811.1 630.0,820.0 624.4,821.7 620.0,819.4"/>
<polygon fill="#cfa3c9" stroke="#cfa3c9" points="602.2,823.9 617.8,819.4 621.1,834.4 603.9,835.0"/>
<polygon fill="#cfa3c9" stroke="#cfa3c9" points="555.6,736.7 557.8,733.3 571.7,725.0 572.8,746.1 571.7,751.7 556.7,753.3 554.4,745.6"/>
<polygon fill="#9fd3cf" stroke="#9fd3cf" points="550.6,737.2 553.9,736.7 556.1,752.8 547.2,755.6"/>
</g><g fill="none" stroke="#fff" stroke-width="0.72" stroke-linejoin="round">
<polygon points="823.9,259.1 820.0,272.9 809.9,274.1 800.3,283.7 798.6,290.9 790.6,298.1 793.5,307.8 789.4,315.0 784.6,319.8 784.1,325.8 778.6,328.2 777.4,341.5 772.6,348.7 767.8,355.9 769.0,361.9 766.6,368.0 767.8,375.2 766.6,387.2 771.4,389.6 781.7,395.6 778.6,404.1 771.4,408.9 767.8,416.1 766.6,425.7 756.9,431.8 749.7,436.6 748.5,442.6 746.1,451.0 737.7,447.4 724.4,445.5 714.8,451.0 706.4,457.0 707.6,464.3 700.4,471.5 688.3,477.5 671.5,477.5 670.3,485.7 646.7,492.9 637.8,491.0 635.6,490.0 634.4,485.2 621.2,481.6 613.9,475.6 605.5,463.5 607.9,453.9 601.9,449.1 606.7,439.5 607.9,425.0 605.5,417.8 606.7,403.3 603.8,399.7 599.5,402.9 558.6,403.8 552.6,405.8 551.8,416.6 558.6,432.2 528.5,461.1 528.5,451.5 536.9,450.3 534.5,444.3 530.9,425.5 542.9,425.0 544.1,381.7 591.1,381.2 591.6,390.8 597.3,390.8 598.1,387.7 608.9,387.2 611.3,384.8 618.5,387.7 628.1,380.0 629.4,370.4 637.8,366.8 652.2,346.3 654.6,331.8 657.0,325.1 669.1,325.1 670.3,322.9 675.1,324.1 690.7,314.5 696.8,312.1 698.0,310.2 705.2,309.0 705.2,301.0 711.9,300.6 722.0,309.0 737.7,306.6 741.3,300.6 755.7,283.7 756.9,276.5 779.8,264.9 787.0,266.4 793.0,267.3 797.9,261.6 806.3,259.1 811.1,260.8"/>
<polygon points="746.1,451.0 748.5,442.6 749.7,436.6 756.9,431.8 766.6,425.7 770.2,425.3 772.6,429.3 777.4,434.2 779.8,437.8 784.6,431.8 789.4,429.3 796.7,434.2 807.5,428.1 812.3,435.4 813.0,442.6 806.3,447.4 795.5,449.8 791.8,457.0 793.0,463.0 789.4,473.9 790.6,481.1 789.4,498.0 785.8,500.4 784.1,494.3 779.8,487.1 770.2,483.5 763.0,487.1 760.5,494.3 763.0,504.0 770.2,513.6 775.0,520.8 773.8,531.7 765.4,534.1 753.3,536.5 746.1,542.5 743.7,550.9 724.4,550.9 717.2,548.5 710.0,549.7 701.6,547.8 700.4,550.2 692.7,550.2 691.9,543.0 685.9,538.9 705.2,520.8 706.4,508.8 704.0,505.2 713.6,494.3 719.6,493.1 734.1,479.9 746.1,466.7"/>
<polygon points="685.9,539.0 691.9,543.1 692.7,550.3 700.4,550.3 701.6,547.9 710.0,549.8 717.2,548.6 724.4,551.0 743.7,551.0 746.1,564.3 746.6,576.3 741.3,593.1 734.1,605.2 726.8,612.4 714.8,622.0 702.8,631.7 699.9,627.3 698.0,630.5 693.1,624.4 691.2,618.4 681.1,617.2 664.3,614.8 657.0,606.4 646.2,604.0 652.2,589.5 659.4,572.7 661.8,547.9 672.7,549.3 679.9,547.4 681.1,543.1"/>
<polygon points="600.5,550.3 630.6,551.0 631.8,547.9 634.2,551.0 636.6,549.8 639.7,553.4 643.1,549.8 646.2,547.9 661.8,547.9 659.4,572.7 652.2,589.5 646.2,604.0 630.6,625.6 630.1,611.2 624.5,610.0 617.3,610.0 617.3,603.3 600.5,602.8 599.3,576.3"/>
<polygon points="646.2,493.2 670.3,486.0 683.5,502.9 682.3,508.9 684.7,516.1 683.5,522.1 676.3,526.2 685.9,539.0 681.1,543.1 679.9,547.4 672.7,549.3 661.8,547.9 646.2,547.9 643.1,549.8 639.7,553.4 636.6,549.8 634.2,551.0 631.8,547.9 630.6,551.0 600.5,550.3 606.5,535.4 616.1,517.3 637.8,511.3 641.4,506.5"/>
<polygon points="670.3,486.0 671.5,477.6 688.3,477.6 700.4,471.6 707.6,464.4 706.4,457.1 714.8,451.1 724.4,445.6 737.7,447.5 746.1,451.1 746.1,466.8 734.1,480.0 719.6,493.2 713.6,494.4 704.0,505.3 706.4,508.9 705.2,520.9 685.9,539.0 676.3,526.2 683.5,522.1 684.7,516.1 682.3,508.9 683.5,502.9"/>
<polygon points="600.5,602.8 617.3,603.3 617.3,610.0 624.5,610.0 630.1,611.2 630.6,625.6 646.2,604.0 657.0,606.4 664.3,614.8 681.1,617.2 691.2,618.4 693.1,624.4 698.0,630.5 699.9,627.3 702.8,631.7 700.4,640.1 698.0,648.5 691.9,638.9 685.9,636.5 678.7,634.1 670.3,635.3 616.1,653.3 590.8,655.7 594.4,650.9 602.9,646.1 596.9,629.3 598.1,614.8"/>
<polygon points="616.1,653.3 670.3,635.3 678.7,634.1 685.9,636.5 676.3,650.9 669.1,660.5 665.5,677.4 661.8,687.0 655.8,687.0 653.4,694.3 657.0,697.9 659.4,703.9 660.6,715.9 652.2,720.7 645.0,711.1 639.0,708.7 631.8,715.9 624.5,714.7 617.3,709.9 622.1,702.7 622.1,689.4 617.3,687.0 617.3,672.6 623.3,666.6"/>
<polygon points="494.0,385.3 500.7,381.7 536.8,381.7 541.7,384.1 542.9,425.0 530.8,425.5 530.8,433.4 514.0,434.6 509.2,437.0 506.8,431.0 501.9,429.8 497.1,432.2 495.9,425.0 492.3,419.0 488.7,417.8 493.5,411.8 491.1,406.9 495.9,396.1"/>
<polygon points="528.4,461.1 558.5,432.2 551.8,416.6 552.5,405.7 558.5,403.8 599.4,402.9 603.8,399.7 606.7,403.3 605.5,417.8 607.9,425.0 606.7,439.4 601.8,449.1 607.9,453.9 605.5,463.5 613.9,475.6 621.1,481.6 634.3,485.2 635.5,490.0 621.1,491.2 613.9,487.6 593.4,491.2 592.2,478.0 587.4,475.6 586.2,465.9 583.8,451.5 577.8,449.1 580.2,444.3 575.4,447.9 570.5,448.6 570.1,453.9 556.1,468.3 557.3,471.9 544.1,482.8 539.3,475.6 535.6,473.1 528.4,465.9"/>
<polygon points="544.1,482.8 557.3,471.9 556.1,468.3 570.1,453.9 570.5,448.6 577.8,449.1 583.8,451.5 586.2,465.9 587.4,475.6 592.2,478.0 593.4,491.2 589.8,493.6 589.8,504.4 582.6,508.1 573.0,511.7 568.1,508.1 560.9,506.8 556.1,508.1 548.9,499.6 544.1,494.8"/>
<polygon points="497.1,432.2 501.9,429.8 506.8,431.0 509.2,437.0 514.0,434.6 530.8,433.4 534.4,444.3 536.8,450.3 528.4,451.5 528.4,465.9 535.6,473.1 539.3,475.6 544.1,482.8 544.1,494.8 534.4,491.2 527.2,490.0 521.2,492.4 520.0,486.4 514.0,482.8 509.2,484.0 506.8,476.8 510.4,471.9 509.2,463.5 503.1,461.1 500.7,456.3 497.1,439.4"/>
<polygon points="456.2,413.0 470.6,410.6 476.7,403.3 488.7,402.1 491.1,397.3 494.0,397.3 495.9,396.1 491.1,406.9 493.5,411.8 488.7,417.8 492.3,419.0 495.9,425.0 497.1,432.2 493.5,434.6 485.1,435.8 480.3,440.6 481.0,449.1 476.7,444.3 473.1,438.2 463.4,432.2 464.6,426.2 458.6,421.4"/>
<polygon points="480.3,440.6 485.1,435.8 493.5,434.6 497.1,439.4 500.7,456.3 495.9,461.1 487.5,469.5 482.7,474.3 479.1,468.3 481.0,449.1"/>
<polygon points="482.7,474.3 487.5,469.5 495.9,461.1 503.1,461.1 509.2,463.5 510.4,471.9 506.8,476.8 509.2,484.0 514.0,482.8 520.0,486.4 521.2,492.4 518.8,494.8 521.2,508.1 515.2,507.3 503.1,506.8 501.9,500.8 497.1,497.2 491.1,492.4 476.7,490.0 477.9,480.4"/>
<polygon points="521.2,492.4 527.2,490.0 534.4,491.2 544.1,494.8 548.9,499.6 556.1,508.1 544.1,510.5 534.4,514.1 527.2,518.9 523.6,514.1 518.8,509.3 521.2,508.1 518.8,494.8"/>
<polygon points="408.1,469.5 410.5,461.1 421.3,458.7 427.3,452.7 428.5,443.1 438.1,441.8 444.2,437.0 442.5,429.8 455.0,429.8 461.0,428.6 463.4,432.2 473.1,438.2 476.7,444.3 481.0,449.1 479.1,468.3 482.7,474.3 477.9,480.4 476.7,490.0 465.8,488.8 462.2,479.2 461.0,473.1 462.2,469.5 458.6,464.0 452.6,464.7 450.2,469.5 440.6,469.5 434.5,473.1 432.1,482.8 423.7,484.0 420.1,490.0 421.3,499.6 417.7,499.6 414.1,490.0 409.3,485.2 410.5,478.0"/>
<polygon points="450.2,469.5 452.6,464.7 458.6,464.0 462.2,469.5 461.0,473.1 455.0,472.7"/>
<polygon points="421.3,499.6 420.1,490.0 423.7,484.0 432.1,482.8 434.5,473.1 440.6,469.5 450.2,469.5 455.0,472.7 461.0,473.1 462.2,479.2 465.8,488.8 476.7,490.0 491.1,492.4 497.1,497.2 501.9,500.8 503.1,506.8 515.2,507.3 521.2,508.1 518.8,509.3 523.6,514.1 527.2,518.9 521.2,520.1 526.0,526.1 523.6,527.3 515.2,524.9 510.4,529.7 503.1,526.1 495.9,528.5 486.3,527.3 475.5,528.5 464.6,529.7 457.4,526.1 450.2,521.3 444.2,518.9 433.3,517.7 432.1,514.1 421.3,514.1"/>
<polygon points="421.3,514.1 432.1,514.1 433.3,517.7 444.2,518.9 450.2,521.3 457.4,526.1 464.6,529.7 475.5,528.5 486.3,527.3 495.9,528.5 503.1,526.1 510.4,529.7 515.2,528.5 518.8,533.3 521.9,536.9 520.0,540.5 520.0,546.6 508.0,545.8 506.8,541.8 501.9,545.4 495.9,544.2 491.1,546.6 485.1,544.2 481.5,547.8 474.3,552.6 467.0,557.4 462.2,555.0 455.0,551.4 444.2,550.2 441.8,545.4 434.5,535.7 428.5,526.1 421.3,518.9"/>
<polygon points="527.2,518.9 534.4,514.1 544.1,510.5 556.1,508.1 560.9,506.8 559.7,514.1 559.7,540.5 566.9,544.2 566.9,550.2 520.0,550.2 520.0,546.6 520.0,540.5 521.9,536.9 518.8,533.3 515.2,528.5 515.2,524.9 523.6,527.3 526.0,526.1 521.2,520.1"/>
<polygon points="560.9,506.8 568.1,508.1 573.0,511.7 582.6,508.1 589.8,504.4 589.8,493.6 593.4,491.2 613.9,487.6 621.1,491.2 635.5,490.0 645.2,492.4 640.4,510.5 630.7,512.9 616.3,518.9 610.3,528.5 601.8,550.2 566.9,550.2 566.9,544.2 559.7,540.5 559.7,514.1"/>
<polygon points="467.0,557.4 474.3,552.6 481.5,547.8 485.1,544.2 491.1,546.6 495.9,544.2 501.9,545.4 506.8,541.8 508.0,545.8 520.0,546.6 520.0,550.2 515.2,555.0 512.8,561.0 505.6,564.6 495.9,567.0 486.3,569.4 477.9,575.5 471.8,583.9 469.4,582.7 468.2,569.4"/>
<polygon points="444.2,550.2 455.0,551.4 462.2,555.0 467.0,557.4 468.2,569.4 469.4,582.7 469.4,586.3 455.0,589.9 445.4,598.3 440.6,597.1 416.5,593.5 414.1,587.5 421.3,581.5 436.9,569.4 439.4,559.8"/>
<polygon points="520.0,550.2 551.3,550.7 550.8,567.0 540.5,571.8 530.8,577.9 523.6,586.3 515.2,597.1 509.9,606.8 508.7,618.8 502.7,621.2 495.4,626.0 489.4,621.2 482.2,622.4 476.2,618.8 469.0,615.2 464.1,616.4 454.5,615.2 446.1,616.4 444.2,605.5 445.4,598.3 455.0,589.9 469.4,586.3 471.8,583.9 477.9,575.5 486.3,569.4 495.9,567.0 505.6,564.6 512.8,561.0 515.2,555.0"/>
<polygon points="551.3,550.7 599.4,550.2 600.6,576.7 599.4,600.7 598.2,622.4 570.1,620.0 550.8,617.6 535.2,617.6 529.1,621.2 514.7,626.0 511.1,630.8 509.9,606.8 515.2,597.1 523.6,586.3 530.8,577.9 540.5,571.8 550.8,567.0"/>
<polygon points="511.0,630.9 514.6,626.1 529.1,621.3 535.1,617.7 550.7,617.7 570.0,620.1 598.2,622.5 597.0,629.7 603.0,646.1 594.5,650.9 580.1,646.1 570.0,641.8 558.0,639.4 555.5,644.2 547.1,646.6 543.5,651.4 544.7,656.2 526.7,657.9 533.9,667.0 529.1,671.8 524.3,667.0 517.0,659.8 512.2,652.6 508.6,644.2 508.6,618.9"/>
<polygon points="558.0,639.4 570.0,641.8 580.1,646.1 594.5,650.9 590.9,655.7 570.0,658.6 550.7,657.4 544.7,656.2 543.5,651.4 547.1,646.6 555.5,644.2"/>
<polygon points="526.7,657.8 544.8,656.1 550.8,657.4 570.0,658.6 590.7,655.7 616.0,653.3 623.2,666.5 617.2,672.5 617.2,687.0 622.0,689.4 622.0,702.6 617.2,709.8 583.5,735.8 581.1,736.6 576.8,735.6 575.6,733.4 577.7,730.5 576.8,727.2 578.9,724.5 582.3,719.9 582.3,708.1 571.5,709.4 563.1,698.5 560.4,691.1 559.2,685.0 550.8,683.8 542.3,686.2 538.7,683.8 531.5,674.2 529.1,671.8 533.9,667.0"/>
<polygon points="415.9,594.8 418.3,614.1 415.9,628.5 414.7,635.7 417.1,641.8 413.5,650.2 411.1,658.6 402.7,659.8 395.5,657.4 390.6,658.6 384.6,653.8 378.6,651.4 371.4,639.4 377.4,627.3 382.2,625.6 382.2,621.3 391.8,616.5 401.5,608.1 405.1,603.2"/>
<polygon points="415.9,594.8 418.3,593.6 443.6,598.4 442.4,608.1 446.0,616.5 441.2,622.5 432.8,626.1 425.6,632.1 418.3,636.9 414.7,635.7 415.9,628.5 418.3,614.1"/>
<polygon points="418.3,636.9 425.6,632.1 432.8,626.1 441.2,622.5 446.0,616.5 454.4,615.3 464.1,616.5 468.9,615.3 476.1,618.9 482.1,622.5 489.3,621.3 495.4,626.1 502.6,621.3 508.6,618.9 508.6,644.2 500.2,644.9 493.0,644.2 489.3,647.8 483.3,647.3 478.5,644.9 473.7,645.4 470.1,649.0 467.7,651.4 464.1,653.1 456.8,657.4 452.0,655.0 449.6,657.4 440.0,656.2 437.6,659.8 425.6,661.0 423.1,669.4 418.3,673.1 411.1,670.6 411.1,658.6 413.5,650.2 417.1,641.8 414.7,635.7"/>
<polygon points="371.4,639.4 378.6,651.4 375.0,661.0 371.4,667.0 361.8,665.8 360.6,657.4 361.8,649.0 367.8,641.8"/>
<polygon points="360.6,657.4 361.8,665.8 371.4,667.0 370.2,673.1 357.7,673.1 358.1,661.0"/>
<polygon points="378.6,651.4 384.6,653.8 390.6,658.6 395.5,657.4 402.7,659.8 411.1,658.6 411.1,670.6 413.5,673.1 411.1,682.7 407.5,686.3 402.7,698.3 401.5,705.6 402.7,712.8 395.5,716.4 389.4,712.8 383.4,708.0 378.6,701.9 375.0,698.3 373.8,688.7 370.2,681.5 370.2,673.1 371.4,667.0 375.0,661.0"/>
<polygon points="357.7,673.1 370.2,673.1 370.2,681.5 373.8,688.7 375.0,698.3 378.6,701.9 383.4,708.0 382.2,715.2 375.0,715.2 370.2,708.0 366.6,701.9 361.8,700.7 356.9,703.1 349.7,699.5 346.1,695.9 352.1,686.3"/>
<polygon points="343.7,699.5 349.7,699.5 356.9,703.1 352.1,710.4 352.1,715.2 355.7,717.6 336.0,717.6 340.1,708.0"/>
<polygon points="336.0,718.8 341.8,719.5 344.9,740.5 338.9,741.7 334.1,740.5 330.5,732.0 334.1,723.6"/>
<polygon points="341.8,719.5 379.8,716.4 382.2,734.4 344.9,740.5"/>
<polygon points="379.8,716.4 382.2,715.2 389.4,716.4 395.5,721.2 397.9,729.6 401.5,733.2 382.2,735.6"/>
<polygon points="395.5,721.2 394.3,717.6 402.7,712.8 413.5,710.4 418.3,714.0 428.0,715.2 423.1,732.0 415.9,733.2 401.5,733.2 397.9,729.6"/>
<polygon points="428.0,715.2 455.6,706.8 454.4,721.2 450.8,726.0 442.4,730.8 435.2,733.2 428.0,738.1 421.9,734.4 423.1,732.0"/>
<polygon points="407.5,686.3 413.5,682.7 425.6,683.9 431.6,691.1 430.4,703.1 426.8,714.0 418.3,714.0 413.5,710.4 402.7,712.8 401.5,705.6 402.7,698.3"/>
<polygon points="413.5,673.1 425.6,674.3 425.6,683.9 413.5,682.7 411.1,682.7"/>
<polygon points="425.6,661.0 437.6,659.8 444.8,664.6 452.0,663.4 449.6,675.5 425.6,673.1 423.1,669.4"/>
<polygon points="440.0,656.2 449.6,657.4 452.0,655.0 454.4,658.6 452.0,663.4 444.8,664.6 437.6,659.8"/>
<polygon points="456.8,657.4 464.1,653.1 467.7,651.4 468.9,652.6 462.9,679.1 450.8,675.5 452.0,663.4 454.4,658.6"/>
<polygon points="425.6,674.3 449.6,675.5 458.1,680.3 455.6,695.9 447.2,691.1 431.6,691.1 425.6,683.9"/>
<polygon points="470.1,649.0 473.7,645.4 478.5,644.9 483.3,647.3 486.9,662.2 483.3,671.8 482.1,682.7 488.1,686.3 490.5,695.9 496.6,708.0 502.6,711.6 493.0,717.6 489.3,716.4 483.3,705.6 476.1,693.5 468.9,683.9 464.1,680.3 462.9,679.1 468.9,652.6"/>
<polygon points="486.9,647.8 489.3,647.8 493.0,644.2 500.2,644.9 508.6,644.2 509.8,659.8 511.0,671.8 507.4,681.5 509.8,691.1 521.8,695.9 519.4,701.9 502.6,711.6 496.6,708.0 490.5,695.9 488.1,686.3 482.1,682.7 483.3,671.8 486.9,662.2 483.3,647.3"/>
<polygon points="508.6,644.2 512.2,652.6 517.0,659.8 524.3,667.0 531.5,674.3 538.7,683.9 531.5,685.1 527.9,685.1 521.8,689.9 521.8,695.9 509.8,691.1 507.4,681.5 511.0,671.8 509.8,659.8"/>
<polygon points="502.6,711.6 519.4,701.9 521.8,695.9 521.8,689.9 527.9,685.1 535.1,686.3 538.7,693.5 536.3,703.1 542.3,708.0 548.3,715.2 549.5,727.2 538.7,730.8 529.1,732.0 519.4,729.6 509.8,723.6"/>
<polygon points="489.3,721.2 513.4,757.3 482.1,751.3 452.0,744.1"/>
<polygon points="542.3,686.3 550.7,683.9 559.2,685.1 560.4,691.1 550.7,689.9 544.7,691.1"/>
<polygon points="336.0,745.3 342.5,769.3 330.5,766.9"/>
<polygon points="330.5,766.9 342.5,769.3 328.1,783.8 324.4,782.6"/>
<polygon points="342.5,769.3 348.0,775.4 334.1,789.8 328.1,783.8"/>
<polygon points="348.0,775.4 354.5,789.8 347.3,799.4 334.1,789.8"/>
<polygon points="348.5,771.8 366.6,764.5 387.0,791.0 370.2,803.0 361.8,788.6 354.5,789.8"/>
<polygon points="354.5,789.8 361.8,788.6 370.2,803.0 364.2,812.7 347.3,799.4"/>
<polygon points="401.5,734.4 415.9,733.2 411.1,746.5 407.5,751.3 400.3,744.1"/>
<polygon points="415.9,733.2 421.9,734.4 428.0,738.1 423.1,750.1 419.5,751.3 418.3,756.1 413.5,758.5 407.5,751.3 411.1,746.5"/>
<polygon points="442.4,730.8 450.8,726.0 449.6,740.5 435.2,733.2"/>
<polygon points="550.7,736.8 554.3,736.8 555.5,756.1 547.1,754.9"/>
<polygon points="519.7,660.0 530.6,660.0 535.4,667.2 531.8,670.8 524.5,667.2 518.5,662.4"/>
<polygon points="542.6,685.3 558.2,684.1 559.4,691.3 546.2,691.3"/>
<polygon points="617.2,710.6 624.4,714.2 631.7,715.4 638.9,709.4 646.1,711.8 647.3,717.8 643.7,729.8 636.5,740.6 629.3,747.9 625.6,755.1 626.8,763.5 623.2,770.7 617.2,773.1 605.2,767.1 601.6,761.1 595.6,756.3 581.1,756.3 579.9,741.8 583.5,735.8"/>
<polygon points="620.8,821.8 626.8,821.3 636.5,828.5 648.5,838.1 658.1,845.4 665.4,855.0 670.2,864.6 671.4,870.6 667.8,874.3 663.0,871.8 660.5,864.6 655.7,861.0 644.9,862.2 620.8,862.2 622.0,847.8 619.6,834.5"/>
<polygon points="410.0,770.6 418.3,776.7 422.2,780.6 427.2,781.7 427.8,785.0 421.1,788.9 421.7,793.3 417.8,801.1 415.6,805.6 394.4,806.7 392.8,797.8 388.9,790.6"/>
<polygon points="421.1,788.9 440.6,782.2 444.4,783.9 450.0,793.9 416.1,805.6 417.8,801.1 421.7,793.3"/>
<polygon points="444.4,783.9 451.1,785.0 456.7,781.1 468.9,781.7 474.4,783.3 481.1,787.2 467.8,789.4 450.0,793.9"/>
<polygon points="443.9,798.3 467.8,789.4 487.8,788.3 494.4,794.4 500.0,795.6 507.8,806.7 468.9,829.4 466.7,828.3 460.6,826.7"/>
<polygon points="416.1,805.6 443.9,798.3 460.6,826.7 459.4,829.4 446.7,828.9 444.4,825.0 440.6,824.4 438.9,827.8 433.3,837.8 428.9,833.3 429.4,826.7 431.7,817.8 427.8,807.8"/>
<polygon points="468.9,829.4 487.2,821.1 491.1,826.7 489.4,830.0 492.2,838.9 494.4,837.8 502.8,836.1 505.0,839.4 489.4,849.4 486.7,843.3 480.0,839.4 472.2,833.9"/>
<polygon points="487.2,821.1 507.8,806.7 528.9,800.6 527.8,810.0 522.2,820.0 515.6,823.9 511.7,823.3 505.6,816.7 502.2,816.7 492.2,825.6 491.1,826.7"/>
<polygon points="491.1,826.7 492.2,825.6 502.2,816.7 505.6,816.7 511.7,823.3 515.6,823.9 519.4,823.9 517.8,828.9 508.9,837.8 505.0,839.4 502.8,836.1 494.4,837.8 492.2,838.9 489.4,830.0"/>
<polygon points="528.9,800.6 533.3,798.3 538.9,814.4 533.3,816.7 527.8,821.7 522.2,820.0 527.8,810.0"/>
<polygon points="519.4,823.9 522.2,820.0 527.8,821.7 533.3,816.7 538.9,814.4 541.1,815.6 550.6,833.9 555.0,848.9 540.0,855.6 533.3,837.8 516.7,841.1 508.9,837.8 517.8,828.9"/>
<polygon points="487.8,788.3 491.1,787.2 497.8,787.8 507.8,788.3 515.0,792.8 525.6,785.0 533.3,797.8 528.9,800.6 507.8,806.7 500.0,795.6 494.4,794.4"/>
<polygon points="475.6,777.8 517.8,766.1 520.0,772.2 502.2,778.9 495.6,783.9 491.1,787.2 487.8,786.7 480.0,783.9 476.7,781.1"/>
<polygon points="447.8,767.8 475.0,773.9 474.4,781.7 468.9,781.1 451.1,775.6 446.7,772.2"/>
<polygon points="410.0,770.6 412.2,768.3 446.7,775.0 451.1,775.6 460.0,780.0 456.7,781.1 451.1,785.0 444.4,783.9 440.6,782.2 427.2,781.7 422.2,780.6 418.3,776.7"/>
<polygon points="522.8,774.4 527.8,773.9 533.3,770.0 546.7,767.2 550.0,772.2 556.7,786.7 532.8,796.7"/>
<polygon points="387.2,810.6 394.4,809.4 395.0,821.1 387.8,823.9"/>
<polygon points="380.0,823.3 387.8,823.9 393.3,825.0 396.7,828.3 391.7,833.9 380.0,826.7"/>
<polygon points="396.7,828.3 400.0,823.3 402.2,824.4 406.7,845.6 391.7,833.9"/>
<polygon points="572.8,707.8 582.2,707.2 582.2,720.0 578.9,724.4 576.7,727.2 577.8,730.6 574.4,732.2 572.8,731.1"/>
<polygon points="573.9,737.2 581.1,736.7 580.0,742.2 579.4,746.7 572.8,746.1 573.3,740.0"/>
<polygon points="572.8,747.2 579.4,747.2 580.6,752.2 581.7,755.6 578.9,757.8 576.7,755.0 572.8,751.7"/>
<polygon points="587.8,755.6 595.6,755.0 600.0,756.7 603.3,765.6 596.7,768.3 592.2,763.3 587.8,758.3"/>
<polygon points="582.2,756.1 587.8,758.3 584.4,764.4 581.1,768.9 576.7,768.9 578.9,763.3"/>
<polygon points="587.8,761.1 592.2,763.3 596.7,768.3 603.3,766.1 604.4,769.4 585.6,774.4 583.9,770.0 585.6,764.4"/>
<polygon points="571.7,752.2 578.9,758.3 578.9,763.3 575.6,769.4 572.2,766.7 566.1,758.3"/>
<polygon points="566.1,758.9 572.2,766.7 573.9,770.6 566.7,770.0 562.2,772.2 557.8,773.9 556.1,771.1 553.9,770.0"/>
<polygon points="517.8,766.1 540.0,760.6 571.1,752.8 566.1,758.3 553.9,770.0 551.1,771.1 546.7,767.2 541.1,763.9 530.0,768.9 521.1,772.2"/>
<polygon points="551.1,771.7 556.1,771.1 557.8,773.9 562.2,772.2 566.7,770.0 573.9,770.6 575.6,773.3 576.1,776.7 557.8,785.6 550.6,772.2"/>
<polygon points="575.6,770.0 583.3,769.4 584.4,774.4 576.7,776.7 575.6,773.3"/>
<polygon points="533.3,797.8 557.2,787.2 575.6,827.2 550.6,833.9"/>
<polygon points="558.3,786.1 568.3,782.2 574.4,791.1 580.6,803.3 584.4,807.8 591.1,822.2 576.1,826.7"/>
<polygon points="570.0,781.7 576.1,777.8 577.8,783.3 574.4,790.0"/>
<polygon points="577.8,777.8 587.8,775.6 588.9,780.6 592.8,785.6 591.7,793.3 585.0,795.6 580.6,788.9 577.8,783.3"/>
<polygon points="588.3,775.6 605.6,770.0 607.8,775.6 613.3,791.1 613.9,796.7 610.0,798.9 607.2,793.3 593.3,795.6 591.7,793.3 592.8,785.6 588.9,780.6"/>
<polygon points="608.3,775.0 616.1,774.4 617.8,788.9 613.3,789.4 607.8,775.6"/>
<polygon points="574.4,791.1 577.8,786.7 580.6,791.1 585.0,796.7 586.7,802.2 580.6,803.3"/>
<polygon points="580.6,803.3 586.7,801.7 587.2,805.0 581.1,806.7"/>
<polygon points="587.8,797.8 593.3,795.6 607.2,793.3 610.0,798.9 612.2,800.0 605.6,811.1 600.0,807.8 596.7,807.8 592.2,802.2"/>
<polygon points="585.6,797.8 587.8,797.8 592.2,802.2 596.7,807.8 591.7,818.9 584.4,807.8"/>
<polygon points="596.7,808.9 602.8,812.2 598.9,819.4 592.8,818.9"/>
<polygon points="618.9,817.8 624.4,814.4 630.6,808.9 631.7,811.1 630.0,820.0 624.4,821.7 620.0,819.4"/>
<polygon points="602.2,823.9 617.8,819.4 621.1,834.4 603.9,835.0"/>
<polygon points="555.6,736.7 557.8,733.3 571.7,725.0 572.8,746.1 571.7,751.7 556.7,753.3 554.4,745.6"/>
<polygon points="550.6,737.2 553.9,736.7 556.1,752.8 547.2,755.6"/>
<polyline points="334.1,744.1 384.6,735.6 401.5,734.4"/>
<polyline points="344.9,740.5 348.5,771.8"/>
<polyline points="349.7,741.7 360.6,765.7"/>
<polyline points="361.8,740.5 366.6,764.5"/>
<polyline points="366.6,758.5 389.4,747.7"/>
<polyline points="387.0,736.8 391.8,756.1 401.5,768.1 411.1,768.1"/>
<polyline points="411.1,768.1 452.0,744.1 489.3,721.2 519.4,701.9"/>
<polyline points="459.3,680.3 449.6,740.5 452.0,744.1"/>
<polyline points="464.1,680.3 489.3,721.2 513.4,757.3 519.4,771.8 532.7,797.0 550.7,833.1"/>
<polyline points="452.0,744.1 447.2,766.9"/>
<polyline points="482.1,751.3 477.3,775.4"/>
<polyline points="452.0,744.1 482.1,751.3 513.4,757.3"/>
<polyline points="364.2,812.7 387.0,791.0"/>
<polyline points="370.2,803.0 394.3,807.9 415.9,805.5"/>
<polyline points="364.2,812.7 387.0,810.3"/>
<polyline points="395.5,815.1 425.6,809.1"/>
<polyline points="400.3,822.3 415.9,819.9 430.4,831.9"/>
<polyline points="431.6,691.1 430.4,703.1 456.8,695.9"/>
<polyline points="456.8,715.2 478.5,708.0"/>
<polyline points="551.0,834.5 576.3,827.3 602.8,822.5"/>
<polyline points="604.0,835.7 598.0,865.8"/>
<polyline points="566.7,873.0 598.0,865.8 620.8,862.2 644.9,862.2"/>
<polyline points="602.8,835.7 619.6,834.5"/>
<polyline points="537.8,688.9 552.2,692.5 561.8,698.5 566.7,710.6 559.4,711.8"/>
<polyline points="547.4,714.2 559.4,711.8"/>
<polyline points="604.0,814.1 614.8,804.4 622.0,802.0"/>
<polyline points="380.0,805.0 394.4,806.7 415.6,805.6"/>
<polyline points="380.0,811.7 387.2,810.6"/>
<polyline points="395.0,815.6 424.4,808.3 427.8,807.8"/>
<polyline points="402.2,822.2 415.6,819.4 428.9,833.3"/>
<polyline points="406.7,845.6 420.0,855.6 425.6,860.6"/>
<polyline points="391.1,760.0 402.2,767.8 412.2,768.3"/>
<polyline points="412.2,768.3 424.4,760.0"/>
<polyline points="448.9,760.0 446.7,772.2"/>
<polyline points="480.6,760.0 475.6,777.8"/>
<polyline points="514.4,760.0 522.8,774.4 532.8,796.7 541.1,815.6"/>
<polyline points="495.6,783.9 507.8,788.3"/>
<polyline points="548.3,726.7 549.4,726.7 551.1,735.6 556.7,734.4 557.8,726.7 562.2,725.6 560.0,720.0"/>
<polyline points="612.2,800.0 618.9,802.2 622.2,797.8 617.8,788.9"/>
<polyline points="603.3,820.0 607.8,811.1 614.4,807.8 618.9,803.3 624.4,814.4"/>
<polyline points="614.4,807.8 613.3,814.4 618.9,817.8"/>
<polyline points="612.8,785.6 617.8,785.0"/>
<polyline points="615.6,782.2 616.1,788.9"/>
</g></svg>
<svg class="ic" style="left:0;top:0" width="1920" height="1080" viewBox="0 0 1920 1080">
<defs><clipPath id="insc"><rect x="1006" y="241" width="252" height="237"/></clipPath><filter id="blr"><feGaussianBlur stdDeviation="2.5"/></filter></defs>
<g clip-path="url(#insc)">
<rect x="1005" y="240" width="254" height="239" fill="#f8f5ee"/>
<polygon fill="#e7edda" filter="url(#blr)" points="1207.0,273.6 1215.3,266.7 1226.4,264.0 1234.6,252.9 1240.2,240.5 1259.5,240.5 1259.5,293.0 1248.4,298.5 1234.6,295.7 1226.4,287.4 1215.3,293.0 1204.3,290.2"/>
<polygon fill="#edf0e0" filter="url(#blr)" points="1196.0,301.3 1207.0,294.4 1215.3,299.9 1212.6,312.3 1202.9,317.8 1196.0,312.3"/>
<polygon fill="#faf6e6" filter="url(#blr)" points="1171.2,331.6 1193.2,326.1 1220.8,331.6 1242.9,339.9 1259.5,345.4 1259.5,382.6 1234.6,393.6 1220.8,410.2 1207.0,400.5 1193.2,388.1 1179.4,375.7 1171.2,368.8"/>
<polygon fill="#d4e7ea" points="1004.1,270.2 1017.9,271.2 1026.2,272.3 1034.5,269.5 1045.5,270.6 1047.6,275.0 1055.2,276.4 1064.9,276.4 1067.6,280.5 1075.2,283.3 1077.3,290.2 1080.1,295.7 1085.6,301.3 1091.1,308.2 1095.2,316.4 1099.4,323.3 1096.6,330.2 1100.8,335.8 1096.6,339.9 1093.9,344.0 1099.4,348.2 1103.5,356.5 1109.0,365.0 1113.2,363.3 1111.8,371.6 1112.5,382.6 1114.6,389.5 1110.4,399.2 1104.9,402.6 1096.6,406.1 1085.6,408.8 1082.8,413.0 1071.8,415.7 1066.3,419.9 1060.7,425.4 1052.4,429.5 1048.3,437.8 1040.0,444.7 1030.4,453.0 1022.1,461.3 1017.3,469.6 1015.2,479.2 1004.1,479.2"/>
<polygon fill="#d4e7ea" points="1151.1,396.4 1153.2,388.8 1160.1,387.4 1165.6,380.5 1171.8,376.4 1178.1,374.3 1183.6,378.5 1187.7,384.0 1191.9,390.9 1198.8,392.3 1204.3,399.2 1208.4,406.1 1213.9,413.0 1218.1,421.3 1222.2,429.5 1226.4,428.2 1227.7,417.1 1230.5,407.4 1233.3,396.4 1238.8,389.5 1244.3,385.4 1249.8,384.7 1252.6,393.6 1259.5,397.8 1259.5,479.2 1242.9,479.2 1240.2,465.4 1234.6,462.7 1233.3,451.6 1230.5,440.6 1227.7,432.3 1225.7,437.8 1223.6,451.6 1222.2,464.0 1226.4,479.2 1179.4,479.2 1176.7,472.3 1171.2,468.2 1162.9,459.9 1157.3,457.1 1151.8,453.0 1148.4,447.5 1147.7,437.8 1147.0,424.0 1148.4,410.2"/>
<polygon fill="#dcebec" points="1041.4,251.6 1046.9,252.9 1058.0,258.5 1064.9,262.6 1060.7,264.7 1052.4,261.2 1042.8,257.1"/>
<polygon fill="#dcebec" points="1081.4,261.2 1088.3,262.6 1091.1,269.5 1085.6,270.9 1082.1,266.7"/>
<polygon fill="#f1f1ef" points="1004.1,268.1 1017.9,269.5 1026.2,270.2 1034.5,267.4 1045.5,268.8 1048.3,273.6 1064.9,275.0 1069.0,279.2 1077.3,281.9 1082.8,287.4 1090.4,284.0 1082.8,276.4 1074.5,268.1 1066.3,262.6 1055.2,251.6 1034.5,247.4 1004.1,248.8" opacity=".55"/>
<polygon fill="#e6e6e7" points="1090.4,284.0 1096.6,282.6 1103.5,284.7 1110.4,282.6 1117.3,275.0 1123.5,274.3 1124.9,277.1 1127.0,268.1 1132.5,263.3 1139.4,261.9 1149.1,262.6 1156.0,266.7 1160.1,272.3 1165.6,276.4 1172.5,305.4 1178.1,309.5 1183.6,315.1 1182.9,320.6 1178.1,326.1 1173.9,328.9 1170.5,334.4 1171.2,342.7 1169.8,349.6 1172.5,356.5 1171.2,365.0 1167.7,368.8 1171.2,375.7 1165.6,379.8 1160.1,386.7 1153.2,388.1 1151.1,396.4 1148.4,410.2 1147.0,424.0 1147.7,437.8 1148.4,447.5 1143.5,450.2 1138.0,451.6 1132.5,457.1 1127.0,457.8 1126.3,451.6 1128.4,443.3 1122.8,435.1 1117.3,426.8 1111.8,418.5 1109.0,410.2 1110.4,399.2 1114.6,389.5 1112.5,382.6 1111.8,371.6 1113.2,363.3 1103.5,356.5 1099.4,348.2 1093.9,344.0 1096.6,339.9 1100.8,335.8 1096.6,330.2 1099.4,323.3 1095.2,316.4 1091.1,308.2 1085.6,301.3 1080.1,295.7 1077.3,290.2 1082.8,287.4"/>
<g fill="none" stroke="#f5f5f5" stroke-width="0.7" stroke-linejoin="round">
<polyline points="1124.9,277.1 1122.8,290.2 1120.1,299.9 1113.2,306.8 1106.3,312.3 1099.4,323.3"/>
<polyline points="1106.3,312.3 1104.9,320.6 1118.7,317.8"/>
<polyline points="1104.9,320.6 1106.3,328.9 1118.7,328.9"/>
<polyline points="1096.6,330.2 1106.3,328.9"/>
<polyline points="1103.5,284.7 1107.7,297.1 1113.2,306.8"/>
<polyline points="1130.4,342.0 1136.6,345.4 1138.0,349.6 1132.5,353.7 1127.0,359.2 1121.5,365.0"/>
<polyline points="1138.0,349.6 1146.3,353.7 1151.1,348.9"/>
<polyline points="1146.3,353.7 1149.1,359.2 1147.7,365.0"/>
<polyline points="1158.7,347.5 1165.6,352.3 1169.8,349.6"/>
<polyline points="1162.9,319.2 1171.2,317.8 1178.1,309.5"/>
<polyline points="1121.5,363.3 1124.2,371.6 1122.8,382.6 1128.4,388.1 1138.0,388.1 1143.5,392.3 1144.9,406.1 1142.2,417.1 1135.3,419.9 1129.7,432.3 1128.4,443.3"/>
<polyline points="1124.2,371.6 1132.5,377.1 1143.5,371.6 1149.1,372.9 1153.2,368.8 1157.3,366.0"/>
<polyline points="1122.8,359.1 1128.4,357.8 1138.0,360.5 1150.4,363.3 1153.2,368.8"/>
<polyline points="1132.5,377.1 1138.0,388.1"/>
<polyline points="1144.9,406.1 1148.4,410.2"/>
<polyline points="1114.6,389.5 1121.5,400.5 1124.2,413.0 1131.1,419.9 1135.3,419.9"/>
<polyline points="1113.2,363.3 1121.5,363.3"/>
<polyline points="1112.5,382.6 1122.8,382.6"/>
</g>
<g fill="none" stroke="#f3f6f6" stroke-width="1.1" stroke-linecap="round">
<polyline points="1066.3,419.9 1069.0,407.4 1074.5,396.4 1082.8,392.3"/>
<polyline points="1095.2,370.2 1100.8,367.4 1104.9,366.7"/>
<polyline points="1095.2,330.2 1104.9,331.6"/>
<polyline points="1096.6,337.1 1102.1,344.0 1104.9,349.6"/>
<polyline points="1092.5,344.0 1100.8,346.8 1106.3,345.4"/>
</g>
<g fill="none" stroke="#f8dba0" stroke-width="0.8">
<polyline points="1077.3,242.6 1088.3,252.9 1096.6,266.7 1104.9,283.3"/>
<polyline points="1088.3,242.6 1099.4,254.3 1106.3,269.5 1111.1,281.2"/>
<polyline points="1082.8,410.2 1096.6,406.1 1109.0,401.9 1102.1,410.2 1096.6,419.9 1093.9,432.3 1093.2,451.6 1095.2,469.6 1098.0,479.2"/>
<polyline points="1142.2,451.6 1144.9,462.7 1151.8,472.3 1154.6,479.2"/>
<polyline points="1146.3,450.2 1151.8,459.9 1160.1,468.2 1165.6,473.7 1168.4,479.2"/>
</g>
<polygon fill="#0f2547" points="1183.3,263.7 1179.4,269.5 1177.4,275.7 1176.7,281.9 1178.1,286.1 1182.2,287.2 1179.4,290.2 1178.1,294.4 1176.0,295.7 1176.7,299.2 1173.2,299.9 1172.5,305.4 1169.1,310.2 1164.9,314.4 1162.9,319.2 1160.1,324.7 1157.3,330.2 1156.7,335.1 1158.7,338.5 1162.9,344.0 1160.1,344.0 1158.7,347.5 1151.1,348.9 1148.4,342.7 1144.9,339.9 1139.4,339.2 1135.3,339.9 1130.4,342.0 1124.2,337.8 1118.7,332.3 1120.1,324.7 1122.8,316.4 1127.0,310.2 1131.8,303.3 1133.2,298.5 1129.7,293.0 1131.1,288.8 1136.6,284.7 1142.2,280.5 1151.8,279.9 1158.7,277.8 1164.3,273.0 1172.5,268.1 1178.1,264.7"/>
</g>
<rect x="1005.5" y="240.5" width="252.500" height="237.500" fill="none" stroke="#74a7d4" stroke-width="1"/>
<rect x="1005.7" y="240.7" width="10.600" height="10.600" fill="#fff" stroke="#4f90c8" stroke-width="1.300"/>
<rect x="1005.7" y="353.9" width="10.600" height="10.600" fill="#fff" stroke="#4f90c8" stroke-width="1.300"/>
<rect x="1005.7" y="467.2" width="10.600" height="10.600" fill="#fff" stroke="#4f90c8" stroke-width="1.300"/>
<rect x="1126.4" y="240.7" width="10.600" height="10.600" fill="#fff" stroke="#4f90c8" stroke-width="1.300"/>
<rect x="1126.4" y="467.2" width="10.600" height="10.600" fill="#fff" stroke="#4f90c8" stroke-width="1.300"/>
<rect x="1247.2" y="240.7" width="10.600" height="10.600" fill="#fff" stroke="#4f90c8" stroke-width="1.300"/>
<rect x="1247.2" y="353.9" width="10.600" height="10.600" fill="#fff" stroke="#4f90c8" stroke-width="1.300"/>
<rect x="1247.2" y="467.2" width="10.600" height="10.600" fill="#fff" stroke="#4f90c8" stroke-width="1.300"/>
</svg>
<div class="a" style="left:1496px;top:143px;width:424px;height:901px;background:#efefef"></div>
<div class="a" style="left:1502px;top:176px;width:418px;height:1px;background:#c2c2c2"></div>
<div class="a" style="left:1502px;top:144px;width:68px;height:33px;background:linear-gradient(#f8f8f8,#efefef);border:1px solid #c2c2c2;border-bottom:none;border-radius:3px 3px 0 0"></div>
<div class="a" style="left:1570px;top:146px;width:122px;height:30px;background:linear-gradient(#e6e6e6,#dedede);border:1px solid #c6c6c6;border-bottom:none;border-radius:3px 3px 0 0"></div>
<span class="t" style="left:1514.0px;top:151.3px;font-size:16px;letter-spacing:0.78px;color:#000;">Items</span>
<span class="t" style="left:1582.0px;top:152.3px;font-size:16px;letter-spacing:0.38px;color:#000;">Undo History</span>
<span class="t" style="left:1506.0px;top:180.8px;font-size:16px;letter-spacing:0.78px;color:#000;">Items</span>
<svg class="ic" style="left:1893px;top:185.5px" width="28" height="12" viewBox="0 0 28 12"><rect x="0.5" y="0.5" width="10" height="10" rx="2" fill="none" stroke="#555" stroke-width="1"/><rect x="2.5" y="4.5" width="4" height="4" fill="none" stroke="#555" stroke-width="1"/><path d="M4.5 4.5V2.5H8.5V6.5H6.5" fill="none" stroke="#555" stroke-width="1"/><rect x="14.5" y="0.5" width="10" height="10" rx="2" fill="none" stroke="#555" stroke-width="1"/><path d="M17 3l5 5M22 3l-5 5" stroke="#333" stroke-width="1.6" fill="none"/></svg>
<div class="a" style="left:1502px;top:204px;width:418px;height:334px;background:#fff;border:1px solid #c0c0c0"></div>
<div class="a" style="left:1503px;top:205px;width:416px;height:26px;background:linear-gradient(#fdfdfd,#ececec);border-bottom:1px solid #d4d4d4"></div>
<div class="a" style="left:1534px;top:205px;width:1px;height:26px;background:#d2d2d2"></div>
<div class="a" style="left:1566px;top:205px;width:1px;height:26px;background:#d2d2d2"></div>
<span class="t" style="left:1569.0px;top:207.8px;font-size:16px;letter-spacing:0.47px;color:#000;">Item</span>
<div class="a" style="left:1503px;top:231px;width:416px;height:25px;background:#308cc6"></div>
<span class="t" style="left:1592.0px;top:232.8px;font-size:16px;letter-spacing:0.93px;color:#fff;font-weight:700;">Inset</span>
<span class="t" style="left:1592.0px;top:257.8px;font-size:16px;letter-spacing:0.33px;color:#000;">Main</span>
<div class="a" style="left:1506px;top:236px;width:14px;height:14px;background:#fff;border:1px solid #b3b3b3"></div>
<svg class="ic" style="left:1506px;top:236px" width="14" height="14" viewBox="0 0 13 13"><path d="M3 5.6L5.3 10.6L10.3 2.3" stroke="#111" stroke-width="1.9" fill="none" stroke-linejoin="miter"/></svg>
<div class="a" style="left:1538px;top:236px;width:14px;height:14px;background:#fff;border:1px solid #b3b3b3"></div>
<div class="a" style="left:1506px;top:261px;width:14px;height:14px;background:#fff;border:1px solid #b3b3b3"></div>
<svg class="ic" style="left:1506px;top:261px" width="14" height="14" viewBox="0 0 13 13"><path d="M3 5.6L5.3 10.6L10.3 2.3" stroke="#111" stroke-width="1.9" fill="none" stroke-linejoin="miter"/></svg>
<div class="a" style="left:1538px;top:261px;width:14px;height:14px;background:#fff;border:1px solid #b3b3b3"></div>
<svg class="ic" style="left:1571px;top:236px" width="14" height="14" viewBox="0 0 14 14"><defs><linearGradient id="mg236" x1="0" x2="1"><stop offset="0" stop-color="#9a9a9a"/><stop offset="1" stop-color="#f2f2f2"/></linearGradient></defs><rect x="1" y="1" width="12" height="12" fill="url(#mg236)" stroke="#a8a8a8" stroke-width="1"/><rect x="0.5" y="1" width="2.5" height="12" fill="#e8e8e8" stroke="#aaa" stroke-width=".6"/></svg>
<svg class="ic" style="left:1571px;top:261px" width="14" height="14" viewBox="0 0 14 14"><defs><linearGradient id="mg261" x1="0" x2="1"><stop offset="0" stop-color="#9a9a9a"/><stop offset="1" stop-color="#f2f2f2"/></linearGradient></defs><rect x="1" y="1" width="12" height="12" fill="url(#mg261)" stroke="#a8a8a8" stroke-width="1"/><rect x="0.5" y="1" width="2.5" height="12" fill="#e8e8e8" stroke="#aaa" stroke-width=".6"/></svg>
<svg class="ic" style="left:1505px;top:210px" width="16" height="14" viewBox="0 0 16 14"><path d="M1 7.5C3.5 3.5 11.5 3.5 15 7.5C11.5 11 3.5 11 1 7.5Z" fill="#f4f4f4" stroke="#9a9a9a" stroke-width="1"/><circle cx="8" cy="7.2" r="2.6" fill="#8a8a8a"/><circle cx="8" cy="7.2" r="1.2" fill="#444"/><path d="M1.5 5.5C4 2 12 2 14.5 5.5" fill="none" stroke="#aaa" stroke-width=".8"/></svg>
<svg class="ic" style="left:1538px;top:209px" width="14" height="16" viewBox="0 0 14 16"><path d="M3.5 8V5a3.5 3.5 0 017 0V8" fill="none" stroke="#8e8e8e" stroke-width="1.8"/><rect x="1" y="7" width="12" height="8" rx="1.5" fill="#5f5f5f"/></svg>
<div class="a" style="left:1499px;top:587px;width:1px;height:17px;border-left:1px dotted #b0b0b0"></div>
<div class="a" style="left:1704px;top:540px;width:16px;height:1px;border-top:1px dotted #aaa"></div>
<div class="a" style="left:1502px;top:577px;width:418px;height:1px;background:#c2c2c2"></div>
<div class="a" style="left:1502px;top:544px;width:143px;height:34px;background:linear-gradient(#f8f8f8,#efefef);border:1px solid #c2c2c2;border-bottom:none;border-radius:3px 3px 0 0"></div>
<div class="a" style="left:1645px;top:547px;width:62px;height:30px;background:linear-gradient(#e6e6e6,#dedede);border:1px solid #c6c6c6;border-bottom:none;border-radius:3px 3px 0 0"></div>
<div class="a" style="left:1706px;top:547px;width:76px;height:30px;background:linear-gradient(#e6e6e6,#dedede);border:1px solid #c6c6c6;border-bottom:none;border-radius:3px 3px 0 0"></div>
<span class="t" style="left:1514.0px;top:552.3px;font-size:16px;letter-spacing:0.57px;color:#000;">Item Properties</span>
<span class="t" style="left:1656.0px;top:553.3px;font-size:16px;letter-spacing:0.49px;color:#000;">Atlas</span>
<span class="t" style="left:1718.0px;top:553.3px;font-size:16px;letter-spacing:0.05px;color:#000;">Guides</span>
<span class="t" style="left:1506.0px;top:582.3px;font-size:16px;letter-spacing:0.57px;color:#000;">Item Properties</span>
<svg class="ic" style="left:1893px;top:586px" width="28" height="12" viewBox="0 0 28 12"><rect x="0.5" y="0.5" width="10" height="10" rx="2" fill="none" stroke="#555" stroke-width="1"/><rect x="2.5" y="4.5" width="4" height="4" fill="none" stroke="#555" stroke-width="1"/><path d="M4.5 4.5V2.5H8.5V6.5H6.5" fill="none" stroke="#555" stroke-width="1"/><rect x="14.5" y="0.5" width="10" height="10" rx="2" fill="none" stroke="#555" stroke-width="1"/><path d="M17 3l5 5M22 3l-5 5" stroke="#333" stroke-width="1.6" fill="none"/></svg>
<div class="a" style="left:1502px;top:610px;width:418px;height:27px;background:#b6b6b6"></div>
<span class="t" style="left:1508.0px;top:614.3px;font-size:16px;letter-spacing:0.93px;color:#000;font-weight:700;">Inset</span>
<div class="a" style="left:1502px;top:668px;width:418px;height:376px;background:#efefef;border:1px solid #c3c3c3"></div>
<div class="a" style="left:1905px;top:670px;width:14px;height:373px;background:#f5f5f5;border-left:1px solid #cfcfcf"></div>
<div class="a" style="left:1906px;top:683px;width:13px;height:133px;background:linear-gradient(90deg,#fafafa,#ececec);border:1px solid #c9c9c9;border-left:none"></div>
<div class="a" style="left:1906px;top:816px;width:13px;height:211px;background:#e2e2e2"></div>
<svg class="ic" style="left:1906px;top:671px" width="13" height="372" viewBox="0 0 13 372"><path d="M3 8.5h7l-3.5-4z" fill="#444"/><path d="M3 362.5h7l-3.5 4z" fill="#444"/></svg>
<svg class="ic" style="left:1516px;top:688px" width="12" height="10" viewBox="0 0 12 10"><path d="M0.5 1h11L6 9z" fill="#333"/></svg>
<span class="t" style="left:1537.0px;top:683.3px;font-size:16px;letter-spacing:0.40px;color:#000;font-weight:700;">Main Properties</span>
<div class="a" style="left:1515px;top:708px;width:379px;height:166px;background:#ebebeb;border:1px solid #d3d3d3;border-radius:2px"></div>
<span class="t" style="left:1528.0px;top:726.3px;font-size:16px;letter-spacing:-0.00px;color:#000;">Scale</span>
<span class="t" style="left:1528.0px;top:764.3px;font-size:16px;letter-spacing:0.42px;color:#000;">Map rotation</span>
<span class="t" style="left:1528.0px;top:801.3px;font-size:16px;letter-spacing:-1.26px;color:#000;">CRS</span>
<div class="a" style="left:1629px;top:720px;width:215px;height:31px;background:#fff;border:1px solid #3a86bd;border-radius:3px;box-shadow:inset 0 0 0 1px #bcd9ee"></div>
<span class="t" style="left:1633.0px;top:726.3px;font-size:16px;letter-spacing:1.10px;color:#000;">750000</span>
<div class="a" style="left:1695px;top:724px;width:1px;height:22px;background:#000"></div>
<div class="a" style="left:1629px;top:758px;width:215px;height:30px;background:#fff;border:1px solid #bdbdbd;border-radius:3px"></div>
<div class="a" style="left:1829px;top:759px;width:14px;height:28px;background:linear-gradient(#fbfbfb,#ececec);border-left:1px solid #c9c9c9;border-radius:0 3px 3px 0"></div>
<svg class="ic" style="left:1830px;top:760px" width="13" height="27" viewBox="0 0 13 27"><path d="M3 9.5h7l-3.5-4z" fill="#444"/><path d="M3 17.5h7l-3.5 4z" fill="#444"/></svg>
<span class="t" style="left:1635.0px;top:764.3px;font-size:16px;letter-spacing:0.34px;color:#000;">0.00 °</span>
<div class="a" style="left:1629px;top:795px;width:186px;height:31px;background:linear-gradient(#fdfdfd,#eeeeee);border:1px solid #bdbdbd;border-radius:3px"></div>
<span class="t" style="left:1634.0px;top:801.3px;font-size:16px;letter-spacing:0.01px;color:#000;">Use Project CRS</span>
<svg class="ic" style="left:1798px;top:807px" width="9" height="6" viewBox="0 0 9 6"><path d="M0.5 1h8L4.5 5.5z" fill="#444"/></svg>
<div class="a" style="left:1820px;top:799px;width:24px;height:23px;background:linear-gradient(#fdfdfd,#ececec);border:1px solid #c0c0c0;border-radius:3px"></div>
<div class="a" style="left:1528px;top:838px;width:14px;height:14px;background:#fff;border:1px solid #b3b3b3"></div>
<svg class="ic" style="left:1528px;top:838px" width="14" height="14" viewBox="0 0 13 13"><path d="M3 5.6L5.3 10.6L10.3 2.3" stroke="#111" stroke-width="1.9" fill="none" stroke-linejoin="miter"/></svg>
<span class="t" style="left:1547.0px;top:837.3px;font-size:16px;letter-spacing:0.25px;color:#000;">Draw map canvas items</span>
<svg class="ic" style="left:1516px;top:889px" width="12" height="10" viewBox="0 0 12 10"><path d="M0.5 1h11L6 9z" fill="#333"/></svg>
<span class="t" style="left:1537.0px;top:884.3px;font-size:16px;letter-spacing:-0.10px;color:#000;font-weight:700;">Layers</span>
<div class="a" style="left:1515px;top:908px;width:379px;height:128px;background:#ebebeb;border:1px solid #d3d3d3;border-radius:2px"></div>
<div class="a" style="left:1517px;top:911px;width:364px;height:49px;border:6px solid #fba20f"></div>
<div class="a" style="left:1528px;top:929px;width:14px;height:14px;background:#fff;border:1px solid #b3b3b3"></div>
<svg class="ic" style="left:1528px;top:929px" width="14" height="14" viewBox="0 0 13 13"><path d="M3 5.6L5.3 10.6L10.3 2.3" stroke="#111" stroke-width="1.9" fill="none" stroke-linejoin="miter"/></svg>
<span class="t" style="left:1547.0px;top:927.3px;font-size:16px;letter-spacing:0.39px;color:#000;">Follow map theme</span>
<div class="a" style="left:1697px;top:921px;width:147px;height:30px;background:linear-gradient(#fdfdfd,#eeeeee);border:1px solid #bdbdbd;border-radius:3px"></div>
<span class="t" style="left:1702.0px;top:927.3px;font-size:16px;letter-spacing:0.44px;color:#000;">inset</span>
<svg class="ic" style="left:1828px;top:934px" width="9" height="6" viewBox="0 0 9 6"><path d="M0.5 1h8L4.5 5.5z" fill="#444"/></svg>
<div class="a" style="left:1528px;top:965px;width:14px;height:14px;background:#fff;border:1px solid #b3b3b3"></div>
<span class="t" style="left:1547.0px;top:963.3px;font-size:16px;letter-spacing:0.19px;color:#000;">Lock layers</span>
<div class="a" style="left:1820px;top:962px;width:24px;height:22px;background:linear-gradient(#fdfdfd,#ececec);border:1px solid #c0c0c0;border-radius:3px"></div>
<div class="a" style="left:1528px;top:1000px;width:14px;height:14px;background:#f4f4f4;border:1px solid #c4c4c4"></div>
<span class="t" style="left:1547.0px;top:998.3px;font-size:16px;letter-spacing:0.26px;color:#b4b4b4;">Lock styles for layers</span>
<div class="a" style="left:0px;top:1044px;width:1920px;height:36px;background:#efefef"></div>
<span class="t" style="left:1326.0px;top:1053.3px;font-size:16px;letter-spacing:0.24px;color:#000;">x: 338.149 mm</span>
<span class="t" style="left:1441.0px;top:1053.3px;font-size:16px;letter-spacing:0.01px;color:#000;">y: 121.455 mm</span>
<span class="t" style="left:1555.0px;top:1053.3px;font-size:16px;letter-spacing:-0.20px;color:#000;">page: 1</span>
<div class="a" style="left:1661px;top:1047px;width:152px;height:30px;background:#fff;border:1px solid #bdbdbd;border-radius:3px"></div>
<div class="a" style="left:1792px;top:1048px;width:20px;height:28px;background:linear-gradient(#fdfdfd,#ececec);border-left:1px solid #c6c6c6;border-radius:0 3px 3px 0"></div>
<svg class="ic" style="left:1797px;top:1060px" width="9" height="6" viewBox="0 0 9 6"><path d="M0.5 1h8L4.5 5.5z" fill="#444"/></svg>
<span class="t" style="left:1665.0px;top:1053.3px;font-size:16px;letter-spacing:0.62px;color:#000;">104.4%</span>
<div class="a" style="left:1820px;top:1060px;width:98px;height:5px;background:#dedede;border:1px solid #c4c4c4;border-radius:3px"></div>
<div class="a" style="left:1820px;top:1060px;width:12px;height:5px;background:#3b8ed0;border-radius:3px"></div>
<div class="a" style="left:1829px;top:1057px;width:12px;height:12px;background:linear-gradient(#fcfcfc,#e6e6e6);border:1px solid #b5b5b5;border-radius:3px"></div>
<svg class="ic" style="left:0;top:0" width="1920" height="1080" viewBox="0 0 1920 1080"><defs>
<linearGradient id="gBlue" x1="0" y1="0" x2="0" y2="1"><stop offset="0" stop-color="#6f9bd1"/><stop offset="1" stop-color="#4f7db8"/></linearGradient>
<linearGradient id="gYel" x1="0" y1="0" x2="0" y2="1"><stop offset="0" stop-color="#ffe680"/><stop offset="1" stop-color="#f5cf45"/></linearGradient>
<linearGradient id="gLens" x1="0" y1="0" x2="1" y2="1"><stop offset="0" stop-color="#ffffff"/><stop offset="1" stop-color="#cfd4d8"/></linearGradient>
<linearGradient id="gSky" x1="0" y1="0" x2="0" y2="1"><stop offset="0" stop-color="#4f8fd6"/><stop offset="1" stop-color="#a8c8ea"/></linearGradient>
<linearGradient id="gPage" x1="0" y1="0" x2="1" y2="1"><stop offset="0" stop-color="#ffffff"/><stop offset="1" stop-color="#f1f1f1"/></linearGradient>
</defs><rect x="5" y="76.0" width="1" height="1" fill="#b9b9b9"/><rect x="8" y="76.0" width="1" height="1" fill="#b9b9b9"/><rect x="5" y="79.0" width="1" height="1" fill="#b9b9b9"/><rect x="8" y="79.0" width="1" height="1" fill="#b9b9b9"/><rect x="5" y="82.1" width="1" height="1" fill="#b9b9b9"/><rect x="8" y="82.1" width="1" height="1" fill="#b9b9b9"/><rect x="5" y="85.2" width="1" height="1" fill="#b9b9b9"/><rect x="8" y="85.2" width="1" height="1" fill="#b9b9b9"/><rect x="5" y="88.2" width="1" height="1" fill="#b9b9b9"/><rect x="8" y="88.2" width="1" height="1" fill="#b9b9b9"/>
<rect x="49" y="73" width="1" height="22" fill="#d2d2d2"/><rect x="50" y="73" width="1" height="22" fill="#fafafa"/>
<rect x="221" y="73" width="1" height="22" fill="#d2d2d2"/><rect x="222" y="73" width="1" height="22" fill="#fafafa"/>
<rect x="261" y="73" width="1" height="22" fill="#d2d2d2"/><rect x="262" y="73" width="1" height="22" fill="#fafafa"/>
<rect x="470" y="76.0" width="1" height="1" fill="#b9b9b9"/><rect x="473" y="76.0" width="1" height="1" fill="#b9b9b9"/><rect x="470" y="79.0" width="1" height="1" fill="#b9b9b9"/><rect x="473" y="79.0" width="1" height="1" fill="#b9b9b9"/><rect x="470" y="82.1" width="1" height="1" fill="#b9b9b9"/><rect x="473" y="82.1" width="1" height="1" fill="#b9b9b9"/><rect x="470" y="85.2" width="1" height="1" fill="#b9b9b9"/><rect x="473" y="85.2" width="1" height="1" fill="#b9b9b9"/><rect x="470" y="88.2" width="1" height="1" fill="#b9b9b9"/><rect x="473" y="88.2" width="1" height="1" fill="#b9b9b9"/>
<g transform="translate(17.00,72.00) scale(1.0)"><path d="M3.6 2h16.8a1.6 1.6 0 011.6 1.6v17.3a1.6 1.6 0 01-1.6 1.6h-16.8a1.6 1.6 0 01-1.6-1.6v-17.3a1.6 1.6 0 011.6-1.6z" fill="url(#gBlue)" stroke="#41679d" stroke-width="1"/><rect x="5" y="2.5" width="14" height="9.5" fill="#fafafa"/><path d="M6.5 4.8h11M6.5 7.2h11M6.5 9.6h11" stroke="#6d6d6d" stroke-width="1.1"/><rect x="5.8" y="16" width="12.4" height="6" fill="#eeeeee"/><rect x="7.8" y="17" width="2.6" height="4.6" fill="#24425f"/></g>
<g transform="translate(57.50,72.00) scale(1.0)"><path d="M1.5 1.5h15.0l5.5 5.5v15.5h-20.5z" fill="url(#gPage)" stroke="#7d7d7d" stroke-width="1"/><path d="M16.5 1.5v5.5h5.5" fill="#e9e9e9" stroke="#7d7d7d" stroke-width="1" stroke-linejoin="round"/><path d="M1 1h11.500v5h-6.500v17h-5z" fill="url(#gYel)" stroke="#d0a520" stroke-width=".9"/><path d="M1 8.500h2.600M1 11h1.700M1 13.500h2.600M1 16h1.700M1 18.500h2.600M8 1v2M10.500 1v1.500" stroke="#b88d10" stroke-width=".8"/><rect x="12.8" y="12.8" width="11" height="11" rx="1.6" fill="#c8a41f"/><path d="M18.3 14.200000000000001V22.4" transform="rotate(0 18.3 18.3)" stroke="#fff" stroke-width="1.2"/><path d="M18.3 14.200000000000001V22.4" transform="rotate(45 18.3 18.3)" stroke="#fff" stroke-width="1.2"/><path d="M18.3 14.200000000000001V22.4" transform="rotate(90 18.3 18.3)" stroke="#fff" stroke-width="1.2"/><path d="M18.3 14.200000000000001V22.4" transform="rotate(135 18.3 18.3)" stroke="#fff" stroke-width="1.2"/><circle cx="18.3" cy="18.3" r="2.5" fill="#fff"/><circle cx="18.3" cy="18.3" r="1.3" fill="#c8a41f"/></g>
<g transform="translate(90.00,72.00) scale(1.0)"><path d="M0.500 4.500h12v17.500h-12z" fill="#d2d2d2" stroke="#7d7d7d"/><path d="M3.5 0.5h14.5l5 5v14h-19.5z" fill="url(#gPage)" stroke="#7d7d7d" stroke-width="1"/><path d="M18.0 0.5v5h5" fill="#e9e9e9" stroke="#7d7d7d" stroke-width="1" stroke-linejoin="round"/><path d="M6 3h10.500v4.500h4v9.500h-14.500z" fill="none" stroke="#c9cff0" stroke-width=".8"/><rect x="12.8" y="12.8" width="11" height="11" rx="1.6" fill="#c8a41f"/><path d="M18.3 14.200000000000001V22.4" transform="rotate(0 18.3 18.3)" stroke="#fff" stroke-width="1.2"/><path d="M18.3 14.200000000000001V22.4" transform="rotate(45 18.3 18.3)" stroke="#fff" stroke-width="1.2"/><path d="M18.3 14.200000000000001V22.4" transform="rotate(90 18.3 18.3)" stroke="#fff" stroke-width="1.2"/><path d="M18.3 14.200000000000001V22.4" transform="rotate(135 18.3 18.3)" stroke="#fff" stroke-width="1.2"/><circle cx="18.3" cy="18.3" r="2.5" fill="#fff"/><circle cx="18.3" cy="18.3" r="1.3" fill="#c8a41f"/></g>
<g transform="translate(123.00,72.00) scale(1.0)"><path d="M2.5 3h14.5l4.5 4.5v13.5h-19z" fill="url(#gPage)" stroke="#7d7d7d" stroke-width="1"/><path d="M17.0 3v4.5h4.5" fill="#e9e9e9" stroke="#7d7d7d" stroke-width="1" stroke-linejoin="round"/><path d="M4.5 5.5h11v3h3v10h-14z" fill="none" stroke="#c9cff0" stroke-width=".8"/><path d="M13.5 12.5L21 21" stroke="#6b5a2a" stroke-width="4.2" stroke-linecap="round"/><path d="M13.5 12.5L21 21" stroke="#e8cf7a" stroke-width="2.6" stroke-linecap="round"/><path d="M8.6 6.6a4 4 0 015-.9l-2.6 2.6.6 2.2 2.2.6 2.6-2.6a4 4 0 01-5.2 4.8 4 4 0 01-2.6-6.700z" fill="#f4f4f4" stroke="#555" stroke-width=".9"/></g>
<g transform="translate(156.00,72.00) scale(1.0)"><path d="M1.500 3.500h7.500l2 2.500h9.500v5h-19z" fill="#f2c93f" stroke="#d4a72c" stroke-width=".9"/><path d="M2 20.500l-.5-10.500l2-1.500h19.500l-2 12z" fill="url(#gYel)" stroke="#d9ad2e" stroke-width=".9" stroke-linejoin="round"/></g>
<g transform="translate(189.00,72.00) scale(1.0)"><path d="M3.6 2h16.8a1.6 1.6 0 011.6 1.6v17.3a1.6 1.6 0 01-1.6 1.6h-16.8a1.6 1.6 0 01-1.6-1.6v-17.3a1.6 1.6 0 011.6-1.6z" fill="url(#gBlue)" stroke="#41679d" stroke-width="1"/><rect x="5" y="2.5" width="14" height="9.5" fill="#fafafa"/><path d="M6.5 4.8h11M6.5 7.2h11M6.5 9.6h11" stroke="#6d6d6d" stroke-width="1.1"/><rect x="5.8" y="16" width="12.4" height="6" fill="#eeeeee"/><rect x="7.8" y="17" width="2.6" height="4.6" fill="#24425f"/><rect x="13.600" y="13.400" width="10" height="10" rx="1.800" fill="#4f9a55" stroke="#3c7d45" stroke-width=".7"/><path d="M16 21l5.200-5.200" stroke="#fff" stroke-width="2.200" stroke-linecap="round"/></g>
<g transform="translate(231.00,72.00) scale(1.0)"><path d="M2 1.5h10.5l5 5v16h-15.5z" fill="url(#gPage)" stroke="#7d7d7d" stroke-width="1"/><path d="M12.5 1.5v5h5" fill="#e9e9e9" stroke="#7d7d7d" stroke-width="1" stroke-linejoin="round"/><rect x="11.5" y="12.8" width="10.6" height="10.6" rx="1.6" fill="#c8a41f"/><path d="M16.8 14.000000000000002V22.200000000000003" transform="rotate(0 16.8 18.1)" stroke="#fff" stroke-width="1.2"/><path d="M16.8 14.000000000000002V22.200000000000003" transform="rotate(45 16.8 18.1)" stroke="#fff" stroke-width="1.2"/><path d="M16.8 14.000000000000002V22.200000000000003" transform="rotate(90 16.8 18.1)" stroke="#fff" stroke-width="1.2"/><path d="M16.8 14.000000000000002V22.200000000000003" transform="rotate(135 16.8 18.1)" stroke="#fff" stroke-width="1.2"/><circle cx="16.8" cy="18.1" r="2.5" fill="#fff"/><circle cx="16.8" cy="18.1" r="1.3" fill="#c8a41f"/></g>
<g transform="translate(269.00,72.00) scale(1.0)"><path d="M7 2.5h10v6h-10z" fill="#e8e8e8" stroke="#b9b9b9" stroke-width=".8"/><path d="M4.5 7.5h15a2.5 2.5 0 012.5 2.5v5a2.5 2.5 0 01-2.5 2.5h-15a2.5 2.5 0 01-2.5-2.5v-5a2.5 2.5 0 012.5-2.5z" fill="url(#gBlue)" stroke="#41679d" stroke-width="1"/><path d="M5.5 11.2h13" stroke="#2b456a" stroke-width="1.4" opacity=".75"/><rect x="7" y="12" width="10" height="9.5" fill="#f4f4f4" stroke="#8a8a8a" stroke-width=".8"/><path d="M8.7 14.6h6.6M8.7 16.8h6.6M8.7 19h6.6" stroke="#666" stroke-width="1"/></g>
<g transform="translate(302.50,71.00) scale(1.0)"><path d="M1 1.5h10.5l5 5v16h-15.5z" fill="url(#gPage)" stroke="#7d7d7d" stroke-width="1"/><path d="M11.5 1.5v5h5" fill="#e9e9e9" stroke="#7d7d7d" stroke-width="1" stroke-linejoin="round"/><rect x="2" y="8.500" width="13.500" height="10" fill="url(#gSky)"/><path d="M2 18.500v-4.500c3-3 5.500-3.500 8-2.200s4 2.700 5.500 3v3.700z" fill="#c9a84a"/><path d="M2 18.500v-2c4-2 8-2 13.500 0v2z" fill="#a38a3a"/><rect x="12.2" y="13.8" width="10.8" height="10.8" rx="1.6" fill="#2f4d6a"/><path d="M17.2 16.8H14.5V21.6H17.2" fill="none" stroke="#fff" stroke-width="1.5"/><path d="M16.5 19.200000000000003H20.8" stroke="#fff" stroke-width="1.5"/><path d="M18.7 16.8L21.4 19.200000000000003L18.7 21.6" fill="none" stroke="#fff" stroke-width="1.3"/></g>
<g transform="translate(335.50,71.00) scale(1.0)"><path d="M1 1.5h10.5l5 5v16h-15.5z" fill="url(#gPage)" stroke="#7d7d7d" stroke-width="1"/><path d="M11.5 1.5v5h5" fill="#e9e9e9" stroke="#7d7d7d" stroke-width="1" stroke-linejoin="round"/><path d="M8.200 8.200v9.600" transform="rotate(0 8.200 13)" stroke="#f59a23" stroke-width="2" stroke-linecap="round"/><path d="M8.200 8.200v9.600" transform="rotate(45 8.200 13)" stroke="#f59a23" stroke-width="2" stroke-linecap="round"/><path d="M8.200 8.200v9.600" transform="rotate(90 8.200 13)" stroke="#f59a23" stroke-width="2" stroke-linecap="round"/><path d="M8.200 8.200v9.600" transform="rotate(135 8.200 13)" stroke="#f59a23" stroke-width="2" stroke-linecap="round"/><rect x="12.2" y="13.8" width="10.8" height="10.8" rx="1.6" fill="#2f4d6a"/><path d="M17.2 16.8H14.5V21.6H17.2" fill="none" stroke="#fff" stroke-width="1.5"/><path d="M16.5 19.200000000000003H20.8" stroke="#fff" stroke-width="1.5"/><path d="M18.7 16.8L21.4 19.200000000000003L18.7 21.6" fill="none" stroke="#fff" stroke-width="1.3"/></g>
<g transform="translate(368.50,71.00) scale(1.0)"><path d="M1 1.5h10.5l5 5v16h-15.5z" fill="url(#gPage)" stroke="#7d7d7d" stroke-width="1"/><path d="M11.5 1.5v5h5" fill="#e9e9e9" stroke="#7d7d7d" stroke-width="1" stroke-linejoin="round"/><path d="M3 19.500c2.500-2.500 5-7 5.500-12.500c.2-2-1.800-2-1.600 0c.5 4.500 4 8.500 8.600 9.500c1.500.3 1.500-1.200 0-1.300c-4.500-.2-9 1.300-12.500 4.300z" fill="none" stroke="#e0352b" stroke-width="1.500"/><rect x="12.2" y="13.8" width="10.8" height="10.8" rx="1.6" fill="#2f4d6a"/><path d="M17.2 16.8H14.5V21.6H17.2" fill="none" stroke="#fff" stroke-width="1.5"/><path d="M16.5 19.200000000000003H20.8" stroke="#fff" stroke-width="1.5"/><path d="M18.7 16.8L21.4 19.200000000000003L18.7 21.6" fill="none" stroke="#fff" stroke-width="1.3"/></g>
<g transform="translate(401.00,72.00) scale(1.0)"><path d="M2 9.500l8.500-7.500v4.500c6 0 11.500 2.300 11.500 8.300 0 4.400-3.700 7.200-8.500 7.200-1.600 0-2.600-.8-2.600-2 0-1.700 1.700-2.300 3.300-2.300 2 0 3.200-.9 3.200-2.400 0-2.100-2.700-2.800-6.900-2.800v4.500z" fill="#e8813a" stroke="#d66e2a" stroke-width=".8" stroke-linejoin="round"/></g>
<g transform="translate(434.00,72.00) scale(1.0)"><g transform="translate(24,0) scale(-1,1)"><path d="M2 9.500l8.500-7.500v4.500c6 0 11.500 2.300 11.500 8.300 0 4.400-3.700 7.200-8.500 7.200-1.600 0-2.600-.8-2.600-2 0-1.700 1.700-2.300 3.300-2.300 2 0 3.200-.9 3.200-2.400 0-2.100-2.700-2.800-6.900-2.800v4.500z" fill="#d8d8d8" stroke="#cdcdcd" stroke-width=".8" stroke-linejoin="round"/></g></g>
<g transform="translate(482.00,72.00) scale(1.0)"><rect x="1" y="4" width="22" height="16" rx="3" fill="#dadada" stroke="#cfcfcf" stroke-width="1.200"/><path d="M4 8.500c2-1.500 4-1 5 0s1 3-.5 4-1.500 3-3 3.500M12.500 7c2-.5 3.500 0 3.500 1.500s-2 2-2 3.500 2 2.500 1.500 4M18 8.500c1.500 0 2.500 1 2.500 2.500s-1 2-1 3.500" fill="none" stroke="#c2c2c2" stroke-width="1.300"/><path d="M1.500 12h21M8.500 4.500v15M15.500 4.500v15" stroke="#e6e6e6" stroke-width=".8"/></g>
<g transform="translate(516.50,72.00) scale(1.0)"><rect x="2.500" y="3" width="3" height="18" fill="#cfcfcf"/><g transform="translate(3,0)"><path d="M3.500 12l9.500-9.500v6h7.500v7h-7.500v6z" fill="#cfcfcf"/></g></g>
<g transform="translate(549.00,72.00) scale(1.0)"><path d="M3.500 12l9.500-9.500v6h7.500v7h-7.500v6z" fill="#cfcfcf"/></g>
<g transform="translate(678.00,72.00) scale(1.0)"><g transform="translate(24,0) scale(-1,1)"><path d="M3.500 12l9.500-9.500v6h7.500v7h-7.500v6z" fill="#cfcfcf"/></g></g>
<g transform="translate(711.00,72.00) scale(1.0)"><rect x="18.500" y="3" width="3" height="18" fill="#cfcfcf"/><g transform="translate(21,0) scale(-1,1)"><path d="M3.500 12l9.500-9.500v6h7.500v7h-7.500v6z" fill="#cfcfcf"/></g></g>
<g transform="translate(745.00,72.00) scale(1.0)"><path d="M7 2.5h10v6h-10z" fill="#e4e4e4" stroke="#b9b9b9" stroke-width=".8"/><path d="M4.5 7.5h15a2.5 2.5 0 012.5 2.5v5a2.5 2.5 0 01-2.5 2.5h-15a2.5 2.5 0 01-2.5-2.5v-5a2.5 2.5 0 012.5-2.5z" fill="#d2d2d2" stroke="#c6c6c6" stroke-width="1"/><rect x="7" y="12" width="10" height="9.5" fill="#e9e9e9" stroke="#c2c2c2" stroke-width=".8"/><path d="M8.7 14.6h6.6M8.7 16.8h6.6M8.7 19h6.6" stroke="#c4c4c4" stroke-width="1"/></g>
<g transform="translate(778.00,72.00) scale(1.0)"><path d="M1.5 1.5h10.0l4.5 4.5v15.0h-14.5z" fill="#ececec" stroke="#cfcfcf" stroke-width="1"/><path d="M11.5 1.5v4.5h4.5" fill="#e9e9e9" stroke="#cfcfcf" stroke-width="1" stroke-linejoin="round"/><rect x="2.500" y="9" width="12.500" height="8" fill="#d6d6d6"/><rect x="12.4" y="13.2" width="10.6" height="10.6" rx="1.6" fill="#cdcdcd"/><path d="M17.4 16.2H14.7V20.799999999999997H17.4" fill="none" stroke="#fff" stroke-width="1.5"/><path d="M16.7 18.5H20.8" stroke="#fff" stroke-width="1.5"/><path d="M18.7 16.2L21.4 18.5L18.7 20.799999999999997" fill="none" stroke="#fff" stroke-width="1.3"/></g>
<path d="M807.500 83h6.600l-3.300 3.600z" fill="#c4c4c4"/>
<g transform="translate(823.00,72.00) scale(1.0)"><rect x="1.500" y="1.500" width="17.500" height="14.500" rx="2" fill="#b3cbe8" stroke="#4a71a8" stroke-width="1"/><path d="M3.500 5c1.500-1 3-.5 3.500.5s0 2-1 2.500M9 4c1.500 0 2.500.5 2.500 1.500M14 4.500c1 0 2 .5 2.500 1.500M4 11c1 0 2 1 1.500 2.500M14 11.500c1 .5 2 1.500 2 3" fill="none" stroke="#27456e" stroke-width="1.300"/><path d="M13 12l8.500 9" stroke="#4a4a3a" stroke-width="4" stroke-linecap="round"/><path d="M13.500 12.500l8 8.500" stroke="#e6c84c" stroke-width="2.400" stroke-linecap="round"/><circle cx="10.500" cy="8.500" r="4.200" fill="#eef2f7" stroke="#444" stroke-width="1"/><path d="M8.700 6.700l3.600 3.600" stroke="#5b86c0" stroke-width="1.200"/></g>
<rect x="5" y="115.0" width="1" height="1" fill="#b9b9b9"/><rect x="8" y="115.0" width="1" height="1" fill="#b9b9b9"/><rect x="5" y="118.0" width="1" height="1" fill="#b9b9b9"/><rect x="8" y="118.0" width="1" height="1" fill="#b9b9b9"/><rect x="5" y="121.1" width="1" height="1" fill="#b9b9b9"/><rect x="8" y="121.1" width="1" height="1" fill="#b9b9b9"/><rect x="5" y="124.2" width="1" height="1" fill="#b9b9b9"/><rect x="8" y="124.2" width="1" height="1" fill="#b9b9b9"/><rect x="5" y="127.2" width="1" height="1" fill="#b9b9b9"/><rect x="8" y="127.2" width="1" height="1" fill="#b9b9b9"/>
<rect x="186" y="115.0" width="1" height="1" fill="#b9b9b9"/><rect x="189" y="115.0" width="1" height="1" fill="#b9b9b9"/><rect x="186" y="118.0" width="1" height="1" fill="#b9b9b9"/><rect x="189" y="118.0" width="1" height="1" fill="#b9b9b9"/><rect x="186" y="121.1" width="1" height="1" fill="#b9b9b9"/><rect x="189" y="121.1" width="1" height="1" fill="#b9b9b9"/><rect x="186" y="124.2" width="1" height="1" fill="#b9b9b9"/><rect x="189" y="124.2" width="1" height="1" fill="#b9b9b9"/><rect x="186" y="127.2" width="1" height="1" fill="#b9b9b9"/><rect x="189" y="127.2" width="1" height="1" fill="#b9b9b9"/>
<g transform="translate(17.00,111.00) scale(1.0)"><path d="M8.432 15.368L1.8 22" stroke="#2e2e2e" stroke-width="3.8" stroke-linecap="butt"/><path d="M7.532 16.268L2.3 21.5" stroke="#f3cb3c" stroke-width="2.3" stroke-linecap="butt"/><circle cx="14.5" cy="9.3" r="8.2" fill="url(#gLens)" stroke="#555" stroke-width="1.1"/><path d="M14.500 3.800v11M9 9.300h11" stroke="#4f7fc0" stroke-width="2.800"/></g>
<g transform="translate(50.00,111.00) scale(1.0)"><path d="M8.432 15.368L1.8 22" stroke="#2e2e2e" stroke-width="3.8" stroke-linecap="butt"/><path d="M7.532 16.268L2.3 21.5" stroke="#f3cb3c" stroke-width="2.3" stroke-linecap="butt"/><circle cx="14.5" cy="9.3" r="8.2" fill="url(#gLens)" stroke="#555" stroke-width="1.1"/><path d="M9 9.300h11" stroke="#4f7fc0" stroke-width="2.800"/></g>
<g transform="translate(83.00,111.00) scale(1.0)"><rect x="2.500" y="2.500" width="9" height="12.500" fill="#e6e6e6" stroke="#9a9a9a" stroke-width=".9"/><path d="M8.932 15.368L1.8 22" stroke="#2e2e2e" stroke-width="3.8" stroke-linecap="butt"/><path d="M8.032 16.268L2.3 21.5" stroke="#f3cb3c" stroke-width="2.3" stroke-linecap="butt"/><circle cx="15" cy="9.3" r="8.2" fill="url(#gLens)" stroke="#555" stroke-width="1.1"/><text x="15" y="12.800" style="font-family:'Liberation Sans',sans-serif;font-weight:700;font-size:9.500px;letter-spacing:-0.5px" text-anchor="middle" fill="#2a2a2a" text-rendering="geometricPrecision">1:1</text></g>
<g transform="translate(198.00,111.00) scale(1.0)"><rect x="2" y="3" width="12.500" height="11.500" fill="#c5dcf2" stroke="#4f7fb5" stroke-width="1"/><path d="M11.300 13.500V9.500a4.300 4.300 0 018.600 0V13.500" fill="none" stroke="#9b9b9b" stroke-width="2.800"/><path d="M11.300 13.500V9.500a4.300 4.300 0 018.600 0V13.500" fill="none" stroke="#e9e9e9" stroke-width="1.100"/><rect x="8.200" y="13.400" width="14.500" height="9.200" rx="1.200" fill="#f6d423" stroke="#d4b018" stroke-width=".9"/></g>
<g transform="translate(231.00,111.00) scale(1.0)"><rect x="2" y="5.500" width="8.500" height="10" fill="#c5dcf2" stroke="#4f7fb5" stroke-width="1"/><circle cx="15.200" cy="7.800" r="5.600" fill="#c5dcf2" stroke="#4f7fb5" stroke-width="1"/><path d="M11.300 13.500V8.500a4.700 4.700 0 119.200-1.200c.2 1.500-.8 2.700-2.400 2.900" fill="none" stroke="#9b9b9b" stroke-width="2.600"/><path d="M11.300 13.500V8.500a4.700 4.700 0 119.200-1.200c.2 1.500-.8 2.700-2.400 2.900" fill="none" stroke="#e9e9e9" stroke-width="1"/><rect x="8.200" y="13.400" width="14.500" height="9.200" rx="1.200" fill="#f6d423" stroke="#d4b018" stroke-width=".9"/></g>
<g transform="translate(264.00,111.00) scale(1.0)"><rect x="4" y="10.600" width="12" height="8.600" fill="#c5dcf2" stroke="#4f7fb5" stroke-width="1"/><circle cx="14.300" cy="9.200" r="6.100" fill="#c5dcf2" stroke="#4f7fb5" stroke-width="1"/><rect x="1.5" y="1.6999999999999997" width="2.200" height="2.200" fill="#111"/><rect x="20.299999999999997" y="1.6999999999999997" width="2.200" height="2.200" fill="#111"/><rect x="1.5" y="19.7" width="2.200" height="2.200" fill="#111"/><rect x="20.299999999999997" y="19.7" width="2.200" height="2.200" fill="#111"/></g>
<g transform="translate(297.00,111.00) scale(1.0)"><rect x="4.100" y="9.900" width="12.700" height="9.200" fill="#e6eea0" stroke="#aab65a" stroke-width="1"/><circle cx="14.700" cy="9.200" r="6.100" fill="#c5dcf2" stroke="#4f7fb5" stroke-width="1"/><rect x="6.6" y="1.6999999999999997" width="2.200" height="2.200" fill="#111"/><rect x="19.7" y="1.6999999999999997" width="2.200" height="2.200" fill="#111"/><rect x="1.6999999999999997" y="7.6" width="2.200" height="2.200" fill="#111"/><rect x="7.0" y="14.3" width="2.200" height="2.200" fill="#111"/><rect x="19.7" y="14.3" width="2.200" height="2.200" fill="#111"/><rect x="1.6999999999999997" y="19.7" width="2.200" height="2.200" fill="#111"/><rect x="16.9" y="19.7" width="2.200" height="2.200" fill="#111"/></g>
<g transform="translate(330.00,111.00) scale(1.0)"><rect x="2.500" y="10.600" width="15" height="10.500" fill="#c5dcf2" stroke="#6f9bd1"/><rect x="6.500" y="2.500" width="15" height="11" fill="#f3f0a0" stroke="#c9c46a"/><path d="M20.4 21.5h5.4l-2.7 3z" fill="#333"/></g>
<g transform="translate(363.00,111.00) scale(1.0)"><path d="M2.500 1.500v21" stroke="#333" stroke-width="1.100"/><rect x="3.500" y="2.500" width="10" height="7.500" fill="#c8ecc0" stroke="#8cc584"/><rect x="3.500" y="12.700" width="12.700" height="8.400" fill="#c5dcf2" stroke="#6f9bd1"/><path d="M20.4 21.5h5.4l-2.7 3z" fill="#333"/></g>
<g transform="translate(396.00,111.00) scale(1.0)"><path d="M1.400 2v6.500M10.600 2v6M19.700 2v6" stroke="#333" stroke-width="1.100"/><rect x="1.900" y="7.800" width="3.800" height="9" fill="#c8ecc0" stroke="#8cc584"/><rect x="10.600" y="7" width="5.600" height="14" fill="#c5dcf2" stroke="#6f9bd1"/><rect x="19.700" y="7" width="3.800" height="7.800" fill="#c8ecc0" stroke="#8cc584"/><path d="M20.4 21.5h5.4l-2.7 3z" fill="#333"/></g>
<g transform="translate(429.00,111.00) scale(1.0)"><rect x="2.200" y="2.500" width="11.200" height="19" fill="#c5dcf2" stroke="#6f9bd1"/><rect x="16.200" y="2.500" width="5" height="18.500" fill="#f3f0a0" stroke="#c9c46a"/><path d="M3 12h3.600M5.200 10.200l1.800 1.800-1.800 1.800M12.600 12H9M10.400 10.200l-1.800 1.800 1.800 1.800" fill="none" stroke="#4f7fb5" stroke-width="1"/><path d="M20.4 21.5h5.4l-2.7 3z" fill="#333"/></g>
<g transform="translate(116.00,111.00) scale(1.0)"><g fill="#4f86c6" stroke="#3d70ad" stroke-width=".5"><path d="M3.8 0.2h7.2L3.8 7.4z"/><path d="M24 0.2h-7.2L24 7.4z"/><path d="M24 19.8h-7.2L24 12.600000000000001z"/><path d="M3.8 19.8h7.2L3.8 12.600000000000001z"/></g><path d="M6.3 2.7L13.7 10.3M21.5 2.7L13.7 10.3M21.5 17.3L13.7 10.3M6.3 17.3L13.7 10.3" stroke="#4f86c6" stroke-width="3.600"/><path d="M8.800 15.200L1.800 22" stroke="#2e2e2e" stroke-width="3.800"/><path d="M8.200 15.800L2.300 21.500" stroke="#f3cb3c" stroke-width="2.300"/><circle cx="13.700" cy="10.300" r="7" fill="url(#gLens)" stroke="#666" stroke-width="1"/></g>
<g transform="translate(149.00,111.00) scale(1.0)"><path d="M4.600 11.200A7.400 7.400 0 0117.600 6.800" fill="none" stroke="#3f78bf" stroke-width="5"/><path d="M4.600 11.200A7.400 7.400 0 0117.600 6.800" fill="none" stroke="#5b9be0" stroke-width="3.600"/><path d="M22.400 2.600v9h-9z" fill="#5b9be0" stroke="#3f78bf" stroke-width=".8" stroke-linejoin="round"/><path d="M19.400 12.800A7.400 7.400 0 016.400 17.200" fill="none" stroke="#3f78bf" stroke-width="5"/><path d="M19.400 12.800A7.400 7.400 0 016.400 17.200" fill="none" stroke="#5b9be0" stroke-width="3.600"/><path d="M1.600 21.400v-9h9z" fill="#5b9be0" stroke="#3f78bf" stroke-width=".8" stroke-linejoin="round"/></g>
<rect x="13.0" y="148" width="1" height="1" fill="#b9b9b9"/><rect x="13.0" y="151" width="1" height="1" fill="#b9b9b9"/><rect x="16.1" y="148" width="1" height="1" fill="#b9b9b9"/><rect x="16.1" y="151" width="1" height="1" fill="#b9b9b9"/><rect x="19.1" y="148" width="1" height="1" fill="#b9b9b9"/><rect x="19.1" y="151" width="1" height="1" fill="#b9b9b9"/><rect x="22.1" y="148" width="1" height="1" fill="#b9b9b9"/><rect x="22.1" y="151" width="1" height="1" fill="#b9b9b9"/><rect x="25.2" y="148" width="1" height="1" fill="#b9b9b9"/><rect x="25.2" y="151" width="1" height="1" fill="#b9b9b9"/>
<g transform="translate(8.50,158.50) scale(1.0)"><path d="M8.200 12.500V5.200a1.500 1.500 0 013 0V4a1.500 1.500 0 013 0v1.200a1.500 1.500 0 013 0v2.300a1.400 1.400 0 012.800 0V15c0 4-2.300 7.500-5 7.500h-4.500c-2 0-3.300-1.300-4.500-3.500L2.800 13.500c-.8-1.500 1-2.700 2.200-1.500z" fill="#fff" stroke="#1a1a1a" stroke-width="1.300" stroke-linejoin="round"/><path d="M11.200 5.200V11M14.200 4V11M17.200 6V11.500" stroke="#1a1a1a" stroke-width="1.100"/></g>
<g transform="translate(8.00,190.50) scale(1.0)"><path d="M8 2.500H1.500V14.500H6" fill="none" stroke="#111" stroke-width="1.300" stroke-dasharray="2 1.600"/><path d="M9 15.500L3 22" stroke="#3a3a3a" stroke-width="3.600" stroke-linecap="round"/><path d="M8.600 15.900L3.200 21.800" stroke="#e8b84a" stroke-width="2.200" stroke-linecap="round"/><circle cx="14.500" cy="9.500" r="7.500" fill="url(#gLens)" stroke="#666" stroke-width="1"/></g>
<rect x="4.500" y="220.500" width="31" height="30" rx="3" fill="#e3e3e3" stroke="#bdbdbd" stroke-width="1"/>
<g transform="translate(7.50,223.50) scale(1.0)"><rect x="3" y="3" width="16" height="16" fill="none" stroke="#333" stroke-width="1" stroke-dasharray="1.200 2"/><rect x="2" y="2" width="3" height="3" fill="#fff" stroke="#333" stroke-width=".8"/><rect x="17" y="2" width="3" height="3" fill="#fff" stroke="#333" stroke-width=".8"/><rect x="2" y="17" width="3" height="3" fill="#fff" stroke="#333" stroke-width=".8"/><rect x="17" y="17" width="3" height="3" fill="#fff" stroke="#333" stroke-width=".8"/><path d="M6 3.500l0 15 3.800-3.300 2.700 6.300 2.600-1.100-2.700-6.200 5-.2z" fill="#fff" stroke="#111" stroke-width="1.200" stroke-linejoin="round"/></g>
<g transform="translate(8.00,254.50) scale(1.0)"><path d="M4.500 2.500h15.500v18h-13.500z" fill="#e9e9e9" stroke="#9a9a9a" stroke-width="1"/><path d="M2.500 3.500a1.500 1.500 0 013 0v15.500c0 1 .5 1.500 1.500 1.500h-3c-1 0-1.500-.5-1.500-1.500z" fill="#dcdcdc" stroke="#9a9a9a" stroke-width="1"/><path d="M13 5l3.800 4h-2.300v3h-3v-3h-2.300z" fill="#4a7fc1" stroke="#2d5a96" stroke-width=".6"/><rect x="7" y="13" width="3" height="3" fill="#4a7fc1"/><rect x="16.500" y="13" width="3" height="3" fill="#4a7fc1"/><rect x="11.500" y="17.500" width="3" height="3" fill="#4a7fc1"/><path d="M6.500 11l3 3.500-3 3.500z" fill="#4a7fc1"/></g>
<g transform="translate(8.00,287.00) scale(1.0)"><path d="M8 3.500L20 9M8 3.500L2.500 20" stroke="#111" stroke-width="1.400"/><path d="M2.500 20L20 9" stroke="#111" stroke-width="1.200" stroke-dasharray="1.500 1.500"/><path d="M11 11l10 9" stroke="#c48a1a" stroke-width="3.400" stroke-linecap="round"/><path d="M11 17.500l5-6" stroke="#f1c232" stroke-width="3.200" stroke-linecap="round"/><path d="M9.500 13.500l6-4" stroke="#b9b9b9" stroke-width="3.400" stroke-linecap="round"/><circle cx="8" cy="3.500" r="2.600" fill="#3c78d8"/><circle cx="20.500" cy="9" r="2.600" fill="#3c78d8"/><circle cx="2.800" cy="20" r="2.600" fill="#3c78d8"/></g>
<g transform="translate(8.00,319.50) scale(1.0)"><path d="M4.500 2.500h15.500v18h-13.500z" fill="#e9e9e9" stroke="#9a9a9a" stroke-width="1"/><path d="M2.500 3.500a1.500 1.500 0 013 0v15.500c0 1 .5 1.500 1.500 1.500h-3c-1 0-1.500-.5-1.500-1.500z" fill="#dcdcdc" stroke="#9a9a9a" stroke-width="1"/><rect x="15" y="14.5" width="9" height="9" rx="1.8" fill="#5f9a62" stroke="#4a8450" stroke-width=".8"/><path d="M19.5 15.8V22.2M16.3 19.0H22.7" stroke="#fff" stroke-width="2.6"/></g>
<g transform="translate(8.00,352.00) scale(1.0)"><path d="M5 5.500l8-2.500 7.500 1.500v10l-9 5-10-4z" fill="#e2e2e2" stroke="#a8a8a8" stroke-width="1"/><path d="M5 5.500l6.500 4 9-5M11.500 9.500v10M3.500 11l8 3.500 9-4M8.500 4.500l5.500 3.300M15 4l-7 4.500" fill="none" stroke="#b5b5b5" stroke-width=".8"/><rect x="15" y="14.5" width="9" height="9" rx="1.8" fill="#5f9a62" stroke="#4a8450" stroke-width=".8"/><path d="M19.5 15.8V22.2M16.3 19.0H22.7" stroke="#fff" stroke-width="2.6"/></g>
<g transform="translate(8.00,385.00) scale(1.0)"><rect x="2" y="3" width="20" height="14" fill="url(#gSky)"/><path d="M2 17v-5.500c4-3.500 8-4.500 11.500-3s6 3.500 8.500 4V17z" fill="#d3b45a"/><path d="M2 17v-2.500c6-2.500 12-2.500 20 0V17z" fill="#b1963f"/><rect x="15" y="14.5" width="9" height="9" rx="1.8" fill="#5f9a62" stroke="#4a8450" stroke-width=".8"/><path d="M19.5 15.8V22.2M16.3 19.0H22.7" stroke="#fff" stroke-width="2.6"/></g>
<g transform="translate(8.00,417.00) scale(1.0)"><rect x="2.500" y="3.500" width="19" height="13" fill="#f4f4f4" stroke="#8a8a8a" stroke-width="1"/><text x="12" y="14.500" font-family="Liberation Serif, serif" font-size="12.500" text-anchor="middle" fill="#333">T</text><rect x="15" y="14.5" width="9" height="9" rx="1.8" fill="#5f9a62" stroke="#4a8450" stroke-width=".8"/><path d="M19.5 15.8V22.2M16.3 19.0H22.7" stroke="#fff" stroke-width="2.6"/></g>
<g transform="translate(8.00,449.00) scale(1.0)"><rect x="3" y="1.500" width="4.500" height="4.500" rx=".8" fill="#ffc61a" stroke="#e0a800" stroke-width=".6"/><rect x="3" y="7.800" width="4.500" height="4.500" rx=".8" fill="#e0461a" stroke="#b8300d" stroke-width=".6"/><rect x="3" y="14" width="4.500" height="4.500" rx=".8" fill="#14966a" stroke="#0d7550" stroke-width=".6"/><path d="M9.200 4.500h5.600M9.200 10.500h8.800M9.200 16.500h3.600" stroke="#9a9a9a" stroke-width="1.500"/><rect x="15" y="14.5" width="9" height="9" rx="1.8" fill="#5f9a62" stroke="#4a8450" stroke-width=".8"/><path d="M19.5 15.8V22.2M16.3 19.0H22.7" stroke="#fff" stroke-width="2.6"/></g>
<g transform="translate(8.00,486.00) scale(1.0)"><rect x="1.500" y="2.500" width="21" height="3.600" rx=".8" fill="#fff" stroke="#444" stroke-width="1.200"/><path d="M2.500 4.300h4.500M11 4.300h4.500M19 4.300h3" stroke="#444" stroke-width="2.400"/><rect x="15" y="8.5" width="9" height="9" rx="1.8" fill="#5f9a62" stroke="#4a8450" stroke-width=".8"/><path d="M19.5 9.8V16.2M16.3 13.0H22.7" stroke="#fff" stroke-width="2.6"/></g>
<g transform="translate(8.00,511.00) scale(1.0)"><path d="M12 1L4.500 21l8-6.500z" fill="#6f96c8" stroke="#3f659b" stroke-width=".8" stroke-linejoin="round"/><path d="M12 1l8 20-7.500-6.500z" fill="#3f6aa3" stroke="#2d5288" stroke-width=".8" stroke-linejoin="round"/><text x="12.200" y="14" font-family="Liberation Sans, sans-serif" font-weight="700" font-size="7" text-anchor="middle" fill="#fff">N</text><rect x="14.5" y="13.5" width="9.5" height="9.5" rx="1.8" fill="#5f9a62" stroke="#4a8450" stroke-width=".8"/><path d="M19.25 14.8V21.7M15.8 18.25H22.7" stroke="#fff" stroke-width="2.6"/></g>
<g transform="translate(8.00,543.00) scale(1.0)"><rect x="2.500" y="10.500" width="13" height="9.500" fill="#c5dcf2" stroke="#7aa5d8"/><circle cx="16" cy="12" r="6" fill="#f4a8a8" stroke="#e07878"/><path d="M10.500 2L16 11.500H5z" fill="#b5e6b0" stroke="#7fba74"/><rect x="15" y="14.8" width="9" height="9" rx="1.8" fill="#5f9a62" stroke="#4a8450" stroke-width=".8"/><path d="M19.5 16.1V22.5M16.3 19.3H22.7" stroke="#fff" stroke-width="2.6"/><path d="M20.500 21.500h5l-2.500 2.800z" fill="#222"/></g>
<g transform="translate(8.00,576.00) scale(1.0)"><path d="M12 2l2.900 6.500 7.100.7-5.300 4.700 1.500 7-6.200-3.700-6.200 3.700 1.500-7L2 9.200l7.100-.7z" fill="#fbe39a" stroke="#e8b060" stroke-width="1" stroke-linejoin="round"/><rect x="15" y="14" width="9" height="9" rx="1.8" fill="#5f9a62" stroke="#4a8450" stroke-width=".8"/><path d="M19.5 15.3V21.7M16.3 18.5H22.7" stroke="#fff" stroke-width="2.6"/></g>
<g transform="translate(8.00,608.00) scale(1.0)"><path d="M3.500 20.500L17 7" stroke="#333" stroke-width="1.200"/><path d="M21.500 2.500l-2.200 7-4.800-4.800z" fill="#fff" stroke="#333" stroke-width="1" stroke-linejoin="round"/><rect x="2" y="19" width="3" height="3" fill="#333"/><rect x="15" y="14" width="9" height="9" rx="1.8" fill="#5f9a62" stroke="#4a8450" stroke-width=".8"/><path d="M19.5 15.3V21.7M16.3 18.5H22.7" stroke="#fff" stroke-width="2.6"/></g>
<g transform="translate(8.00,640.00) scale(1.0)"><path d="M8.300 2L20.300 7.500M8.300 2L3.300 19.200" stroke="#111" stroke-width="1.400"/><path d="M3.300 19.200L20.300 7.500" stroke="#111" stroke-width="1.200" stroke-dasharray="1.500 1.500"/><circle cx="8.300" cy="2" r="2.600" fill="#3c78d8"/><circle cx="20.300" cy="7.500" r="2.600" fill="#3c78d8"/><circle cx="3.300" cy="19.200" r="2.600" fill="#3c78d8"/><rect x="15" y="14" width="9" height="9" rx="1.8" fill="#5f9a62" stroke="#4a8450" stroke-width=".8"/><path d="M19.5 15.3V21.7M16.3 18.5H22.7" stroke="#fff" stroke-width="2.6"/><path d="M20.500 20.500h5l-2.500 2.800z" fill="#222"/></g>
<g transform="translate(8.00,672.00) scale(1.0)"><rect x="2.500" y="1.500" width="19" height="19" fill="#f4f4f4" stroke="#9a9a9a" stroke-width="1"/><path d="M4.500 5h4M4.500 8h6M4.500 11h7.500M4.500 14h9M4.500 17h6" stroke="#5b86c0" stroke-width="1.500"/><path d="M12 4.500l-2.500 3 2.500 3M17.500 4.500l2.500 3-2.500 3M15.800 3.500l-2 8" fill="none" stroke="#222" stroke-width="1.100"/><rect x="15" y="14.5" width="9" height="9" rx="1.8" fill="#5f9a62" stroke="#4a8450" stroke-width=".8"/><path d="M19.5 15.8V22.2M16.3 19.0H22.7" stroke="#fff" stroke-width="2.6"/></g>
<g transform="translate(8.00,704.00) scale(1.0)"><rect x="2.500" y="1.500" width="19" height="19" fill="#eef3fa" stroke="#7aa5d8" stroke-width="1"/><rect x="3" y="2" width="18" height="4.500" fill="#c5dcf2"/><path d="M5 4.300h4.500M11.500 4.300h8" stroke="#4a7fc1" stroke-width="1.600"/><path d="M5 9h3.500M10.500 9h9M5 12h3.500M10.500 12h9M5 15h3.500M10.500 15h5M5 18h3.500" stroke="#7aa5d8" stroke-width="1.100"/><rect x="14.5" y="14" width="9.5" height="9.5" rx="1.8" fill="#5f9a62" stroke="#4a8450" stroke-width=".8"/><path d="M19.25 15.3V22.2M15.8 18.75H22.7" stroke="#fff" stroke-width="2.6"/></g>
<g transform="translate(8.00,736.00) scale(1.0)"><rect x="2.500" y="1.500" width="19" height="19" fill="#e9e9e9" stroke="#7aa5d8" stroke-width="1"/><rect x="3" y="2" width="18" height="4.500" fill="#c5dcf2"/><path d="M5 4.300h4.500M11.500 4.300h8" stroke="#4a7fc1" stroke-width="1.600"/><path d="M5 9h3.500M10.500 9h9M5 12h3.500M10.500 12h9M5 15h3.500M10.500 15h5M5 18h3.500" stroke="#7aa5d8" stroke-width="1.100"/><path d="M16.500 1.500l2.800 1.800-6.300 9.200-3.200 1.700.4-3.500z" fill="#f1b340" stroke="#b87a1a" stroke-width=".7"/><path d="M10.200 10.700l-.4 3.500 3.200-1.700z" fill="#6b4a2a"/><rect x="14.5" y="14" width="9.5" height="9.5" rx="1.8" fill="#5f9a62" stroke="#4a8450" stroke-width=".8"/><path d="M19.25 15.3V22.2M15.8 18.75H22.7" stroke="#fff" stroke-width="2.6"/></g>
<g transform="translate(8.00,768.00) scale(1.0)"><rect x="2.500" y="1.500" width="19" height="19" fill="#eef3fa" stroke="#7aa5d8" stroke-width="1"/><path d="M8.800 2v18M15.200 2v18M3 8h18M3 14h18" stroke="#c9d3df" stroke-width=".8"/><path d="M3 15l3-2.500 3.500.5 3.500-3.500 2.500-5 2.500 1 3 5v10H3z" fill="#b9c3bd" stroke="none"/><path d="M3 15l3-2.500 3.500.5 3.500-3.500 2.500-5 2.500 1 3 5" fill="none" stroke="#1f6b5a" stroke-width="1.300"/><rect x="15" y="14.8" width="9" height="9" rx="1.8" fill="#5f9a62" stroke="#4a8450" stroke-width=".8"/><path d="M19.5 16.1V22.5M16.3 19.3H22.7" stroke="#fff" stroke-width="2.6"/></g>
<g transform="translate(8.00,799.00) scale(1.0)"><path d="M3 1.500v19.500h19.500" fill="none" stroke="#777" stroke-width="1.300"/><path d="M3 0l-2.200 3.500h4.400zM24 21l-3.500-2.200v4.400z" fill="#777"/><path d="M5.500 15.500c3-1.500 5-1.500 7-4s3-6.500 8.500-8" fill="none" stroke="#c0187a" stroke-width="1.500"/><path d="M5.500 17.500c3-.5 5-1.500 7-3.500s4-2.500 8-.5" fill="none" stroke="#2f9aa8" stroke-width="1.200"/></g>
<g transform="translate(8.00,831.00) scale(1.0)"><rect x="0" y="0" width="8" height="8" fill="#7f7ff2"/><rect x="8" y="0" width="8" height="8" fill="#8040c4"/><rect x="16" y="0" width="8" height="8" fill="#800088"/><rect x="0" y="8" width="8" height="8" fill="#c4c4ff"/><rect x="8" y="8" width="8" height="8" fill="#c080c8"/><rect x="16" y="8" width="8" height="8" fill="#c03c78"/><rect x="0" y="16" width="8" height="8" fill="#ffffff"/><rect x="8" y="16" width="8" height="8" fill="#ffc0c0"/><rect x="16" y="16" width="8" height="8" fill="#ffffff"/><rect x="14" y="14.5" width="9.8" height="9.8" rx="1.8" fill="#5f9a62" stroke="#4a8450" stroke-width=".8"/><path d="M18.9 15.8V23.0M15.3 19.4H22.5" stroke="#fff" stroke-width="2.6"/></g>
<rect x="1534" y="643" width="1" height="18" fill="#d0d0d0"/><rect x="1535" y="643" width="1" height="18" fill="#fafafa"/>
<rect x="1591" y="643" width="1" height="18" fill="#d0d0d0"/><rect x="1592" y="643" width="1" height="18" fill="#fafafa"/>
<rect x="1648" y="643" width="1" height="18" fill="#d0d0d0"/><rect x="1649" y="643" width="1" height="18" fill="#fafafa"/>
<rect x="1705" y="643" width="1" height="18" fill="#d0d0d0"/><rect x="1706" y="643" width="1" height="18" fill="#fafafa"/>
<g transform="translate(1510.00,644.00) scale(0.667)"><path d="M4.600 11.200A7.400 7.400 0 0117.600 6.800" fill="none" stroke="#3f78bf" stroke-width="5"/><path d="M4.600 11.200A7.400 7.400 0 0117.600 6.800" fill="none" stroke="#5b9be0" stroke-width="3.600"/><path d="M22.400 2.600v9h-9z" fill="#5b9be0" stroke="#3f78bf" stroke-width=".8" stroke-linejoin="round"/><path d="M19.400 12.800A7.400 7.400 0 016.400 17.200" fill="none" stroke="#3f78bf" stroke-width="5"/><path d="M19.400 12.800A7.400 7.400 0 016.400 17.200" fill="none" stroke="#5b9be0" stroke-width="3.600"/><path d="M1.600 21.400v-9h9z" fill="#5b9be0" stroke="#3f78bf" stroke-width=".8" stroke-linejoin="round"/></g>
<g transform="translate(1541.50,644.00) scale(0.667)"><rect x="3.500" y="4.500" width="19" height="17" fill="#e4e4e4" stroke="#8a8a8a" stroke-width="1.200"/><rect x="7.500" y="8" width="11" height="10" fill="#f2f2f2" stroke="#8a8a8a" stroke-width="1"/><path d="M3.500 4.500l4 3.500M22.500 4.500l-4 3.500M3.500 21.500l4-3.500M22.500 21.500l-4-3.500" stroke="#8a8a8a" stroke-width="1"/><path d="M2 7c0-5 7-7 10-3l-2 .5c3 0 4 2 4 6h3l-5.500 5.500-5.500-5.500h3c0-2-.5-3-2-3.500-2-.5-4 0-5 0z" fill="#e8813a" stroke="#c96a25" stroke-width=".6"/></g>
<g transform="translate(1567.50,644.00) scale(0.667)"><rect x="3.500" y="4.500" width="19" height="17" fill="#e4e4e4" stroke="#8a8a8a" stroke-width="1.200"/><rect x="7.500" y="8" width="11" height="10" fill="#f2f2f2" stroke="#8a8a8a" stroke-width="1"/><path d="M3.500 4.500l4 3.500M22.500 4.500l-4 3.500M3.500 21.500l4-3.500M22.500 21.500l-4-3.500" stroke="#8a8a8a" stroke-width="1"/><path d="M9 17c0-6 2-9 7-9v-4l7 6.500-7 6.500v-4c-3 0-5 1-7 4z" fill="#e8813a" stroke="#c96a25" stroke-width=".6"/></g>
<g transform="translate(1598.50,644.00) scale(0.667)"><rect x="3.500" y="4.500" width="19" height="18" fill="#e4e4e4" stroke="#8a8a8a" stroke-width="1.200"/><path d="M6 19.500h14" stroke="#8a8a8a" stroke-width="1"/><path d="M6.500 17v2.500M10 18v1.500M13 17v2.500M16 18v1.500M19.500 17v2.500" stroke="#777" stroke-width=".9"/><path d="M5 5c0-5 8-6 9-1v5h4l-6 7-6-7h4V5.500c0-1.500-2-1.500-2 0V7H5z" fill="#e8813a" stroke="#c96a25" stroke-width=".6"/></g>
<g transform="translate(1624.50,644.00) scale(0.667)"><rect x="3.500" y="4.500" width="19" height="18" fill="#e4e4e4" stroke="#8a8a8a" stroke-width="1.200"/><path d="M6 19.500h14" stroke="#8a8a8a" stroke-width="1"/><path d="M6.500 17v2.500M10 18v1.500M13 17v2.500M16 18v1.500M19.500 17v2.500" stroke="#777" stroke-width=".9"/><path d="M7 17c0-7 3-10 9-10V2.500l8 7-8 7V12c-4 0-6 1-9 5z" fill="#e8813a" stroke="#c96a25" stroke-width=".6"/></g>
<g transform="translate(1656.50,644.00) scale(0.667)"><path d="M5 3h16v18H8z" fill="#e9e9e9" stroke="#8a8a8a" stroke-width="1.200"/><path d="M3 4a1.600 1.600 0 013.200 0v15c0 1.200.6 2 1.800 2H4.800C3.600 21 3 20.200 3 19z" fill="#dcdcdc" stroke="#8a8a8a" stroke-width="1.100"/><path d="M13.500 2.500h4.500v9l-2.250-2.500-2.250 2.500z" fill="#4a7fc1" stroke="#2d5a96" stroke-width=".7"/><path d="M18.500 21.500h7l-3.500 3.800z" fill="#333"/></g>
<g transform="translate(1681.50,644.00) scale(0.667)"><rect x="3" y="3" width="19" height="19" fill="#e6e6e6" stroke="#8a8a8a" stroke-width="1.200"/><path d="M12.500 5l3.500 4h-7zM12.500 20l3.500-4h-7zM5 12.500l4-3.500v7zM20 12.500l-4-3.500v7z" fill="#4a7fc1"/><rect x="11" y="11" width="3" height="3" fill="#4a7fc1"/></g>
<path d="M1714.500 652l3-4.500h9a1.200 1.200 0 011.200 1.200v6.600a1.200 1.200 0 01-1.200 1.200h-9z" fill="#f6d21f" stroke="#c9a81a" stroke-width=".9"/><text x="1722.300" y="654.800" font-family="Liberation Sans, sans-serif" font-weight="700" font-size="5.600" text-anchor="middle" fill="#333">abc</text>
<g transform="translate(1738.00,644.00) scale(0.667)"><rect x="3" y="8" width="14" height="13" fill="#d6ded8" stroke="#8aa08f" stroke-width="1.200" stroke-dasharray="2 1.500"/><circle cx="15.500" cy="9.500" r="7" fill="#d6ded8" stroke="#8aa08f" stroke-width="1.200" stroke-dasharray="2 1.500"/><path d="M9 8.500h8v5.500c-3 2.500-6 2.500-8-1z" fill="#5b7f9a"/></g>
<g transform="translate(1852.3,725.2)"><path d="M8.500 2.500h9.500a1.500 1.500 0 011.500 1.500v11.500h-11z" fill="#fafafa" stroke="#555" stroke-width="1.200"/><path d="M8.500 2.500L1.500 9.500l7 6z" fill="#777" stroke="#555" stroke-width="1"/><path d="M10.500 6.300h7.500M10.500 9.700h7.500M10.500 13h7.500" stroke="#555" stroke-width="1.200"/><path d="M17 14.500h6.500l-3.250 4z" fill="#333"/></g>
<g transform="translate(1852.3,763.2)"><path d="M8.500 2.500h9.500a1.500 1.500 0 011.500 1.500v11.500h-11z" fill="#fafafa" stroke="#555" stroke-width="1.200"/><path d="M8.500 2.500L1.500 9.500l7 6z" fill="#777" stroke="#555" stroke-width="1"/><path d="M10.500 6.300h7.500M10.500 9.700h7.500M10.500 13h7.500" stroke="#555" stroke-width="1.200"/><path d="M17 14.500h6.500l-3.250 4z" fill="#333"/></g>
<g transform="translate(1852.3,800.2)"><path d="M8.500 2.500h9.500a1.500 1.500 0 011.500 1.500v11.500h-11z" fill="#fafafa" stroke="#555" stroke-width="1.200"/><path d="M8.500 2.500L1.500 9.500l7 6z" fill="#777" stroke="#555" stroke-width="1"/><path d="M10.500 6.300h7.500M10.500 9.700h7.500M10.500 13h7.500" stroke="#555" stroke-width="1.200"/><path d="M17 14.500h6.500l-3.250 4z" fill="#333"/></g>
<g transform="translate(1852.3,926.2)"><path d="M8.500 2.500h9.500a1.500 1.500 0 011.500 1.500v11.500h-11z" fill="#fafafa" stroke="#555" stroke-width="1.200"/><path d="M8.500 2.500L1.500 9.500l7 6z" fill="#777" stroke="#555" stroke-width="1"/><path d="M10.500 6.300h7.500M10.500 9.700h7.500M10.500 13h7.500" stroke="#555" stroke-width="1.200"/><path d="M17 14.500h6.500l-3.250 4z" fill="#333"/></g>
<g transform="translate(1852.3,962.2)"><path d="M8.500 2.500h9.500a1.500 1.500 0 011.500 1.500v11.500h-11z" fill="#fafafa" stroke="#555" stroke-width="1.200"/><path d="M8.500 2.500L1.500 9.500l7 6z" fill="#777" stroke="#555" stroke-width="1"/><path d="M10.500 6.300h7.500M10.500 9.700h7.500M10.500 13h7.500" stroke="#555" stroke-width="1.200"/><path d="M17 14.500h6.500l-3.250 4z" fill="#333"/></g>
<g transform="translate(1823.500,801.500)"><circle cx="8" cy="8.500" r="6.800" fill="#dfe7ef" stroke="#8a9aa8" stroke-width=".9"/><path d="M1.500 8.500h13M8 1.700v13.600M3 4.500c3 1.500 7 1.500 10 0M3 12.500c3-1.500 7-1.500 10 0M8 1.700c-4 3.500-4 10 0 13.600M8 1.700c4 3.500 4 10 0 13.600" fill="none" stroke="#8a9aa8" stroke-width=".7"/><path d="M3.500 6c1.500-2 4-2 5-.5s-.5 2.500-2 3-2 2-3 1.500z" fill="#7aa7d8" opacity=".8"/><rect x="9" y="10" width="7.500" height="7.500" rx="1" fill="#f1c232"/><path d="M11 15.500l3.600-3.600" stroke="#fff" stroke-width="1.400"/></g>
<g transform="translate(1823,965)"><path d="M1 8C4 3 13 3 16.500 8C13 12.500 4 12.500 1 8z" fill="#f4f4f4" stroke="#8a8a8a" stroke-width=".9"/><path d="M1.500 6C5 1.500 12.500 1.500 16 6" fill="none" stroke="#9a9a9a" stroke-width=".8"/><circle cx="8.800" cy="7.800" r="3.200" fill="#4a78b0"/><circle cx="8.800" cy="7.800" r="1.500" fill="#1f2f44"/><path d="M12.500 13h5l-2.500 3z" fill="#333"/></g></svg>
</body></html>
